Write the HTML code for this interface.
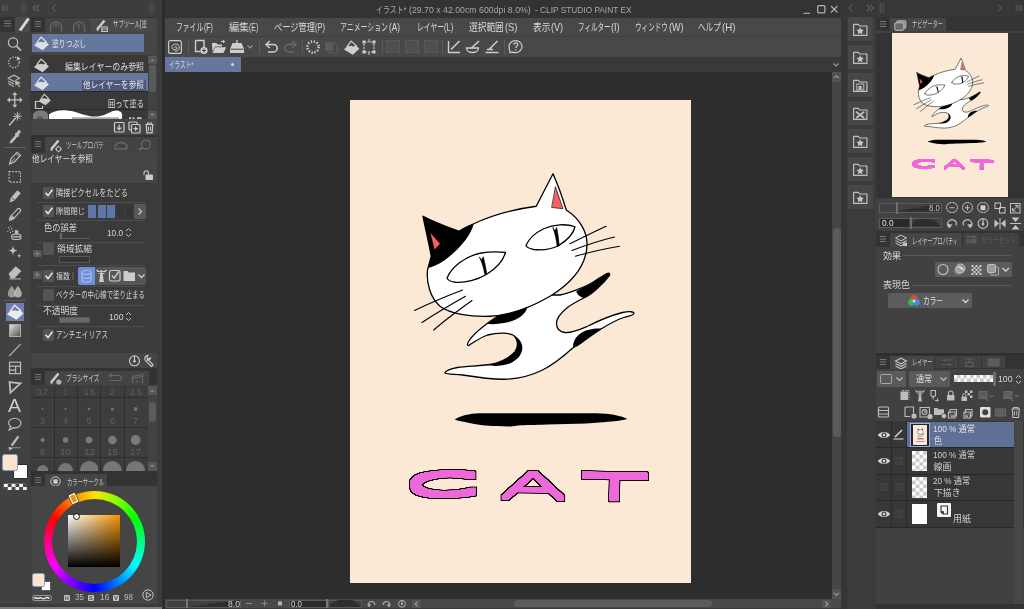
<!DOCTYPE html>
<html lang="ja"><head><meta charset="utf-8"><title>CLIP STUDIO PAINT EX</title>
<style>
html,body{margin:0;padding:0;}
body{width:1024px;height:609px;overflow:hidden;background:#3c3c3c;position:relative;font-family:"Liberation Sans","Noto Sans CJK JP",sans-serif;}
#app{position:absolute;left:0;top:0;width:1024px;height:609px;overflow:hidden;will-change:transform;}
#app div,#app svg,#app span.t{position:absolute;}
#app div{box-sizing:border-box;}
span.t{white-space:nowrap;transform-origin:0 50%;letter-spacing:0;}
svg{overflow:visible;}
</style></head><body><div id="app">
<div style="left:161px;top:0px;width:686px;height:609px;background:#323232;"></div>
<div style="left:165px;top:0px;width:676px;height:18px;background:#333333;"></div>
<span class="t" style="left:375.6px;top:2.85px;font-size:9.5px;line-height:13.5px;color:#a8a8a8;transform:scaleX(0.7323);">イラスト*</span>
<span class="t" style="left:409px;top:2.85px;font-size:9.5px;line-height:13.5px;color:#a8a8a8;transform:scaleX(0.9218);">(29.70 x 42.00cm 600dpi 8.0%)</span>
<span class="t" style="left:535px;top:2.85px;font-size:9.5px;line-height:13.5px;color:#a8a8a8;transform:scaleX(0.8745);">- CLIP STUDIO PAINT EX</span>
<svg style="left:800px;top:2px;" width="40" height="14" viewBox="0 0 40 14"><path d="M3.500 11.300h6.500" stroke="#b4b4b4" stroke-width="1.100" fill="none"/><rect x="17.700" y="3.700" width="7.200" height="7.200" rx="1" stroke="#b4b4b4" stroke-width="1.200" fill="none"/><path d="M31 4l6.500 6.500M37.500 4L31 10.500" stroke="#b4b4b4" stroke-width="1.100" fill="none"/></svg>
<div style="left:165px;top:18px;width:676px;height:18px;background:#484848;"></div>
<div style="left:165px;top:35.5px;width:676px;height:2px;background:#3f3f3f;"></div>
<span class="t" style="left:176px;top:20.05px;font-size:10.5px;line-height:14.5px;color:#d8d8d8;transform:scaleX(0.6476);">ファイル</span>
<span class="t" style="left:203.8px;top:20.05px;font-size:10.5px;line-height:14.5px;color:#d8d8d8;transform:scaleX(0.6631);">(F)</span>
<span class="t" style="left:228.5px;top:20.05px;font-size:10.5px;line-height:14.5px;color:#d8d8d8;transform:scaleX(0.9619);">編集</span>
<span class="t" style="left:249.3px;top:20.05px;font-size:10.5px;line-height:14.5px;color:#d8d8d8;transform:scaleX(0.6571);">(E)</span>
<span class="t" style="left:273.5px;top:20.05px;font-size:10.5px;line-height:14.5px;color:#d8d8d8;transform:scaleX(0.7821);">ページ管理</span>
<span class="t" style="left:315.0px;top:20.05px;font-size:10.5px;line-height:14.5px;color:#d8d8d8;transform:scaleX(0.7143);">(P)</span>
<span class="t" style="left:340.2px;top:20.05px;font-size:10.5px;line-height:14.5px;color:#d8d8d8;transform:scaleX(0.6567);">アニメーション</span>
<span class="t" style="left:388.8px;top:20.05px;font-size:10.5px;line-height:14.5px;color:#d8d8d8;transform:scaleX(0.7857);">(A)</span>
<span class="t" style="left:416.6px;top:20.05px;font-size:10.5px;line-height:14.5px;color:#d8d8d8;transform:scaleX(0.6501);">レイヤー</span>
<span class="t" style="left:444.3px;top:20.05px;font-size:10.5px;line-height:14.5px;color:#d8d8d8;transform:scaleX(0.7319);">(L)</span>
<span class="t" style="left:469.4px;top:20.05px;font-size:10.5px;line-height:14.5px;color:#d8d8d8;transform:scaleX(0.8286);">選択範囲</span>
<span class="t" style="left:504.8px;top:20.05px;font-size:10.5px;line-height:14.5px;color:#d8d8d8;transform:scaleX(0.8857);">(S)</span>
<span class="t" style="left:533px;top:20.05px;font-size:10.5px;line-height:14.5px;color:#d8d8d8;transform:scaleX(0.8238);">表示</span>
<span class="t" style="left:550.9px;top:20.05px;font-size:10.5px;line-height:14.5px;color:#d8d8d8;transform:scaleX(0.8643);">(V)</span>
<span class="t" style="left:578px;top:20.05px;font-size:10.5px;line-height:14.5px;color:#d8d8d8;transform:scaleX(0.6215);">フィルター</span>
<span class="t" style="left:611.0999999999999px;top:20.05px;font-size:10.5px;line-height:14.5px;color:#d8d8d8;transform:scaleX(0.8769);">(I)</span>
<span class="t" style="left:635.4px;top:20.05px;font-size:10.5px;line-height:14.5px;color:#d8d8d8;transform:scaleX(0.6267);">ウィンドウ</span>
<span class="t" style="left:668.9px;top:20.05px;font-size:10.5px;line-height:14.5px;color:#d8d8d8;transform:scaleX(0.8577);">(W)</span>
<span class="t" style="left:698.3px;top:20.05px;font-size:10.5px;line-height:14.5px;color:#d8d8d8;transform:scaleX(0.7206);">ヘルプ</span>
<span class="t" style="left:721.5999999999999px;top:20.05px;font-size:10.5px;line-height:14.5px;color:#d8d8d8;transform:scaleX(0.9192);">(H)</span>
<div style="left:165px;top:37px;width:676px;height:20px;background:#484848;"></div>
<div style="left:165px;top:57px;width:676px;height:15px;background:#393939;"></div>
<div style="left:165px;top:57px;width:76px;height:15px;background:#66779d;"></div>
<span class="t" style="left:169px;top:58.50px;font-size:9px;line-height:13px;color:#dcdcdc;transform:scaleX(0.6230);">イラスト*</span>
<div style="left:231px;top:63px;width:3px;height:3px;background:#d8d8d8;border-radius:50%;"></div>
<svg style="left:832px;top:61px;" width="8" height="8" viewBox="0 0 8 8"><path d="M1.5 2.5L4 5l2.5-2.5" stroke="#9a9a9a" stroke-width="1.1" fill="none"/></svg>
<div style="left:165px;top:72px;width:667px;height:527px;background:#2d2d2d;"></div>
<div style="left:349.7px;top:100.2px;width:341.4px;height:483.2px;background:#fbe8d5;"></div>
<div style="left:832px;top:72px;width:9px;height:527px;background:#454545;"></div>
<div style="left:832px;top:72px;width:9px;height:10px;background:#525252;"></div>
<svg style="left:832px;top:72px;" width="9" height="10" viewBox="0 0 9 10"><path d="M2 6.2L4.5 3.7 7 6.2" stroke="#a0a0a0" stroke-width="1.1" fill="none"/></svg>
<div style="left:833px;top:228px;width:7.5px;height:209px;background:#5a5a5a;border-radius:3.5px;"></div>
<div style="left:832px;top:589px;width:9px;height:10px;background:#525252;"></div>
<svg style="left:832px;top:589px;" width="9" height="10" viewBox="0 0 9 10"><path d="M2 3.8L4.5 6.3 7 3.8" stroke="#a0a0a0" stroke-width="1.1" fill="none"/></svg>
<div style="left:165px;top:599px;width:676px;height:8.5px;background:#484848;"></div>
<div style="left:165px;top:607.5px;width:676px;height:1.5px;background:#3a3a3a;"></div>
<div style="left:166px;top:599.5px;width:75px;height:8px;background:#404040;border:1px solid #5a5a5a;"></div>
<svg style="left:167px;top:600px;" width="73" height="7" viewBox="0 0 73 7"><path d="M20 7L73 0V7z" fill="#2e2e2e"/></svg>
<div style="left:186px;top:599px;width:2px;height:9px;background:#777;"></div>
<span class="t" style="left:228px;top:597.75px;font-size:8.5px;line-height:12.5px;color:#d0d0d0;transform:scaleX(1.0145);">8.0</span>
<svg style="left:243px;top:599px;" width="42" height="9" viewBox="0 0 42 9"><path d="M3 4.5h6M18.5 4.5h6M21.5 1.5v6" stroke="#8a8a8a" stroke-width="1.1" fill="none"/><rect x="35" y="2.5" width="4" height="4" fill="#b0b0b0"/></svg>
<div style="left:288.5px;top:599.5px;width:38px;height:8px;background:#2c2c2c;border:1px solid #5a5a5a;"></div>
<span class="t" style="left:291px;top:597.75px;font-size:8.5px;line-height:12.5px;color:#d0d0d0;transform:scaleX(0.9300);">0.0</span>
<div style="left:328px;top:599.5px;width:34px;height:8px;background:#404040;border:1px solid #5a5a5a;"></div>
<svg style="left:329px;top:600px;" width="32" height="7" viewBox="0 0 32 7"><path d="M0 7C4 0 10 0 14 0H24L32 7z" fill="#2e2e2e"/></svg>
<div style="left:325.5px;top:599px;width:2px;height:9px;background:#777;"></div>
<svg style="left:366px;top:599px;" width="42" height="9" viewBox="0 0 42 9"><path d="M3 7.5A3.2 3.2 0 1 1 8.8 6" stroke="#b0b0b0" stroke-width="1.1" fill="none"/><path d="M1 5.2l2 3 2.2-2.6z" fill="#b0b0b0"/><path d="M23 7.5A3.2 3.2 0 1 0 17.2 6" stroke="#b0b0b0" stroke-width="1.1" fill="none"/><path d="M25 5.2l-2 3-2.2-2.6z" fill="#b0b0b0"/><circle cx="36" cy="4.8" r="3.4" stroke="#b0b0b0" stroke-width="1" fill="none"/><path d="M36 1.4v3.4" stroke="#b0b0b0" stroke-width="1"/><circle cx="36" cy="5" r="1.1" fill="#b0b0b0"/></svg>
<div style="left:412px;top:599.5px;width:9px;height:8px;background:#555;"></div>
<svg style="left:412px;top:599.5px;" width="9" height="8" viewBox="0 0 9 8"><path d="M5.6 1.6L3.2 4l2.4 2.4" stroke="#a0a0a0" stroke-width="1.1" fill="none"/></svg>
<div style="left:514px;top:600px;width:198px;height:7px;background:#5c5c5c;border-radius:3.5px;"></div>
<div style="left:822px;top:599.5px;width:9px;height:8px;background:#555;"></div>
<svg style="left:822px;top:599.5px;" width="9" height="8" viewBox="0 0 9 8"><path d="M3.4 1.6L5.8 4 3.4 6.4" stroke="#a0a0a0" stroke-width="1.1" fill="none"/></svg>
<div style="left:187.5px;top:40px;width:1px;height:14px;background:#5c5c5c;"></div>
<div style="left:259px;top:40px;width:1px;height:14px;background:#5c5c5c;"></div>
<div style="left:302px;top:40px;width:1px;height:14px;background:#5c5c5c;"></div>
<div style="left:381.5px;top:40px;width:1px;height:14px;background:#5c5c5c;"></div>
<div style="left:441.5px;top:40px;width:1px;height:14px;background:#5c5c5c;"></div>
<div style="left:503.8px;top:40px;width:1px;height:14px;background:#5c5c5c;"></div>
<svg style="left:168px;top:40px;" width="14" height="14" viewBox="0 0 14 14"><rect x="0.6" y="0.6" width="12.8" height="12.8" rx="2" stroke="#cfcfcf" stroke-width="1.100" fill="none"/><path d="M6.300 7.600c.6-1.300 2.600-.9 2.600.4 0 1.800-2.900 2.500-4.300.9-1.600-1.900 0-4.700 2.900-4.800 2.400 0 4.100 1.700 3.800 3.900-.3 1.900-2.100 3.100-4.200 3.100" stroke="#cfcfcf" stroke-width="1" fill="none"/></svg>
<svg style="left:193px;top:39px;" width="16" height="16" viewBox="0 0 16 16"><path d="M2.500 1.500h8.500v7M2.500 1.500v11h5" stroke="#cfcfcf" stroke-width="1.400" fill="none"/><circle cx="11" cy="11.500" r="3.600" fill="#cfcfcf"/><path d="M9 11.500h4M11 9.500v4" stroke="#484848" stroke-width="1.100"/></svg>
<svg style="left:211px;top:40px;" width="16" height="14" viewBox="0 0 16 14"><path d="M1 3h4.500l1.200 1.500H11v2H4L1.500 12z" fill="#cfcfcf"/><path d="M4.200 7.300h11L12.400 13H1.600z" fill="#cfcfcf"/><path d="M10 1.500h3.500M12 0l1.800 1.500L12 3" stroke="#cfcfcf" stroke-width="1" fill="none"/></svg>
<svg style="left:229px;top:39px;" width="16" height="16" viewBox="0 0 16 16"><path d="M1 10l2.500-6h9L15 10v4H1z" fill="#cfcfcf"/><path d="M1.500 10.200h13" stroke="#484848" stroke-width="1"/><path d="M8 1v6M5.600 5L8 7.600 10.400 5" stroke="#cfcfcf" stroke-width="1.300" fill="none"/><path d="M3.800 4.300h8.400" stroke="#484848" stroke-width="0"/></svg>
<svg style="left:246px;top:44px;" width="8" height="6" viewBox="0 0 8 6"><path d="M1.500 1.500L4 4l2.500-2.500" stroke="#9a9a9a" stroke-width="1.1" fill="none"/></svg>
<svg style="left:264px;top:39px;" width="16" height="16" viewBox="0 0 16 16"><path d="M3 5.500h6.500a3.700 3.700 0 0 1 0 7.400H4" stroke="#cfcfcf" stroke-width="1.500" fill="none"/><path d="M5.800 2L2 5.500l3.800 3.500" stroke="#cfcfcf" stroke-width="1.500" fill="none"/></svg>
<svg style="left:282px;top:39px;" width="16" height="16" viewBox="0 0 16 16"><path d="M13 5.500H6.500a3.700 3.700 0 0 0 0 7.400H12" stroke="#686868" stroke-width="1.500" fill="none"/><path d="M10.200 2L14 5.500 10.200 9" stroke="#686868" stroke-width="1.500" fill="none"/></svg>
<svg style="left:305px;top:39px;" width="16" height="16" viewBox="0 0 16 16"><circle cx="8" cy="8" r="5.600" stroke="#cfcfcf" stroke-width="2.600" stroke-dasharray="1.300 1.630" fill="none"/></svg>
<svg style="left:324px;top:40px;" width="14" height="14" viewBox="0 0 14 14"><rect x="1" y="2" width="8" height="9" fill="#5c5c5c"/><rect x="5" y="4" width="8" height="9" fill="none" stroke="#5c5c5c" stroke-width="1"/></svg>
<svg style="left:343.5px;top:40px;" width="15.4" height="14.8" viewBox="0 0 14 13.5"><path d="M0 8.700L3.200 5.300C5 6.600 6 4.600 7.500 5.600 9 6.600 10 5.100 11.200 5.300L14 8 8 13.400z" fill="#cfcfcf"/><path d="M2.600 6.300L6.500 1 11.800 5.800" stroke="#cfcfcf" stroke-width="1.150" fill="none" stroke-linejoin="round"/></svg>
<svg style="left:361px;top:39px;" width="16" height="16" viewBox="0 0 16 16"><rect x="3" y="3" width="10" height="10" stroke="#cfcfcf" stroke-width="1.100" fill="none" stroke-dasharray="2 1"/><g fill="#cfcfcf"><rect x="1.500" y="1.500" width="3" height="3"/><rect x="11.500" y="1.500" width="3" height="3"/><rect x="1.500" y="11.500" width="3" height="3"/><rect x="11.500" y="11.500" width="3" height="3"/></g><path d="M8 0v3M8 13v3" stroke="#cfcfcf" stroke-width="1"/></svg>
<svg style="left:385.5px;top:40px;" width="14" height="13" viewBox="0 0 14 13"><rect x="0.500" y="0.500" width="13" height="12" stroke="#585858" stroke-width="1" fill="#4e4e4e"/><path d="M1 12.500L13 1" stroke="#585858" stroke-width="1"/></svg>
<svg style="left:405px;top:40px;" width="14" height="13" viewBox="0 0 14 13"><rect x="0.500" y="0.500" width="13" height="12" stroke="#585858" stroke-width="1" fill="#4e4e4e"/><path d="M1 12.500L13 1" stroke="#585858" stroke-width="1"/></svg>
<svg style="left:423.5px;top:40px;" width="14" height="13" viewBox="0 0 14 13"><rect x="0.500" y="0.500" width="13" height="12" stroke="#585858" stroke-width="1" fill="#4e4e4e"/><path d="M1 12.500L13 1" stroke="#585858" stroke-width="1"/></svg>
<svg style="left:446px;top:39px;" width="16" height="16" viewBox="0 0 16 16"><path d="M2.500 2v11.500H14" stroke="#cfcfcf" stroke-width="1.400" fill="none"/><path d="M5 10.500L13.500 2" stroke="#cfcfcf" stroke-width="1.600"/></svg>
<svg style="left:465px;top:39px;" width="16" height="16" viewBox="0 0 16 16"><path d="M1.500 9c0 6 12 6 12 0z" stroke="#cfcfcf" stroke-width="1.300" fill="none"/><path d="M6 9.500L14 2" stroke="#cfcfcf" stroke-width="1.600"/></svg>
<svg style="left:484px;top:39px;" width="16" height="16" viewBox="0 0 16 16"><path d="M1.500 13.500h13" stroke="#cfcfcf" stroke-width="1.400"/><path d="M3 10.500h6M5 10.500L13.500 2" stroke="#cfcfcf" stroke-width="1.500" fill="none"/></svg>
<svg style="left:508px;top:39px;" width="16" height="16" viewBox="0 0 16 16"><path d="M2 13.500c0-2.500-1-3-1-6a6.500 6 0 1 1 4 5.600z" stroke="#cfcfcf" stroke-width="1.200" fill="none"/><path d="M5.800 5.800c0-2.600 4-2.600 4-.2 0 1.600-2 1.600-2 3.300" stroke="#cfcfcf" stroke-width="1.200" fill="none"/><circle cx="7.800" cy="10.800" r=".8" fill="#cfcfcf"/></svg>
<div style="left:0px;top:0px;width:161px;height:609px;background:#3a3a3a;"></div>
<div style="left:157px;top:0px;width:4.5px;height:609px;background:#3c3c3c;"></div>
<div style="left:161.5px;top:0px;width:3.5px;height:609px;background:#2c2c2c;"></div>
<div style="left:0px;top:0px;width:157px;height:16.5px;background:#3d3d3d;"></div>
<svg style="left:0px;top:0px;" width="160" height="16" viewBox="0 0 160 16"><g stroke="#606060" stroke-width="1.100" fill="none"><path d="M5 5L2.200 8 5 11M8.500 5L5.700 8 8.500 11"/><path d="M35.500 5L32.700 8l2.800 3M39 5L36.200 8 39 11"/><path d="M55.500 4.500L52.500 8l3 3.500"/></g><g fill="#4c4c4c"><rect x="21.500" y="2.500" width="2" height="11"/><rect x="24.500" y="2.500" width="1.500" height="11"/><rect x="149.500" y="2.500" width="2" height="11"/><rect x="152.500" y="2.500" width="1.500" height="11"/></g></svg>
<div style="left:0px;top:16.5px;width:29.5px;height:592.5px;background:#414141;"></div>
<div style="left:0px;top:16.5px;width:29.5px;height:15.5px;background:#333;"></div>
<svg style="left:2px;top:18px;" width="12" height="12" viewBox="0 0 12 12"><path d="M2 3h7M2 5.500h7M2 8h7" stroke="#777" stroke-width="1" fill="none"/></svg>
<div style="left:15px;top:17px;width:14.5px;height:15px;background:#4a4a4a;"></div>
<svg style="left:15px;top:17px;" width="15" height="15" viewBox="0 0 15 15"><path d="M5 13.500L13.500 1.500" stroke="#d8d8d8" stroke-width="3" fill="none"/></svg>
<svg style="left:5.70px;top:35.58px;" width="17.60" height="15.84" viewBox="0 0 20 18"><circle cx="8" cy="7.500" r="5.300" stroke="#bebebe" stroke-width="1.400" fill="none"/><path d="M12 11.500l5 5" stroke="#bebebe" stroke-width="2"/></svg>
<svg style="left:5.70px;top:54.08px;" width="17.60" height="15.84" viewBox="0 0 20 18"><circle cx="9" cy="9.500" r="6" stroke="#bebebe" stroke-width="1.400" stroke-dasharray="1.600 1.600" fill="none"/><path d="M12.500 2.500l4.500 3-4.700 2z" fill="#bebebe"/></svg>
<svg style="left:5.70px;top:73.48px;" width="17.60" height="15.84" viewBox="0 0 20 18"><path d="M2.500 6L9 2.500 15.500 6 9 9.500zM2.500 9L9 12.500M2.500 12l6.500 3.500" stroke="#bebebe" stroke-width="1.200" fill="none"/><path d="M10 8l7.500 3-3 1.200 2 3.300-1.600 1-2-3.400-2.300 2z" fill="#bebebe" stroke="#414141" stroke-width=".5"/></svg>
<svg style="left:5.70px;top:92.08px;" width="17.60" height="15.84" viewBox="0 0 20 18"><path d="M10 1.500v15M2.500 9h15" stroke="#bebebe" stroke-width="1.500"/><path d="M10 0l3 3.500H7zM10 18l3-3.500H7zM1 9l3.500-3v6zM19 9l-3.500-3v6z" fill="#bebebe"/></svg>
<svg style="left:5.70px;top:111.08px;" width="17.60" height="15.84" viewBox="0 0 20 18"><path d="M3.500 16.500L11 8" stroke="#bebebe" stroke-width="1.600"/><path d="M13 1v10M8 6h10M9.500 2.500l7 7M16.500 2.500l-7 7" stroke="#bebebe" stroke-width="1.100"/></svg>
<svg style="left:5.70px;top:129.38px;" width="17.60" height="15.84" viewBox="0 0 20 18"><path d="M4 16.500l1-3 6-7 2.200 2-6 7z" fill="#bebebe"/><path d="M10.500 5l4 3.500" stroke="#bebebe" stroke-width="2"/><path d="M12.500 6.500l2.500-3.500" stroke="#bebebe" stroke-width="3.400" stroke-linecap="round"/></svg>
<div style="left:4px;top:147.3px;width:22px;height:1px;background:#606060;"></div>
<svg style="left:5.70px;top:150.08px;" width="17.60" height="15.84" viewBox="0 0 20 18"><path d="M4 16l1.500-6 7-7.500 4 3.600-7 7.500z" stroke="#bebebe" stroke-width="1.300" fill="none"/><path d="M4 16l6-6.500" stroke="#bebebe" stroke-width="1.100"/><path d="M11.300 4l4 3.600" stroke="#bebebe" stroke-width="1.100"/></svg>
<svg style="left:5.70px;top:169.08px;" width="17.60" height="15.84" viewBox="0 0 20 18"><rect x="3.500" y="3" width="13" height="12" stroke="#bebebe" stroke-width="1.300" stroke-dasharray="2 1.500" fill="none"/></svg>
<svg style="left:5.70px;top:187.58px;" width="17.60" height="15.84" viewBox="0 0 20 18"><path d="M4 16.500l1.500-5.500L13 2.500l3.800 3.500-7.500 8.500z" fill="#bebebe"/><path d="M6.500 11l4 3.500" stroke="#414141" stroke-width="1"/></svg>
<svg style="left:5.70px;top:206.08px;" width="17.60" height="15.84" viewBox="0 0 20 18"><path d="M4 16.500c0-3 1-5 3-6.500l6-6.500c2-2 5 .8 3 2.800l-6 6.500c-1.500 2-3.500 3.200-6 3.700z" stroke="#bebebe" stroke-width="1.300" fill="none"/><path d="M4.500 16c.3-2 1.200-3.600 2.800-5l3 2.800c-1.400 1.400-3.400 2-5.800 2.200z" fill="#bebebe"/></svg>
<svg style="left:5.70px;top:225.08px;" width="17.60" height="15.84" viewBox="0 0 20 18"><rect x="6.500" y="10.500" width="10.500" height="6" rx="2.500" stroke="#bebebe" stroke-width="1.300" fill="none"/><path d="M8 13.500h8" stroke="#bebebe" stroke-width="1.600"/><rect x="10" y="6" width="4" height="4" fill="#bebebe"/><g fill="#bebebe"><circle cx="3" cy="3" r=".7"/><circle cx="5.500" cy="2" r=".7"/><circle cx="4" cy="5.500" r=".7"/><circle cx="6.500" cy="4.500" r=".7"/><circle cx="2" cy="7.500" r=".7"/><circle cx="5" cy="8.500" r=".7"/><circle cx="7.500" cy="7" r=".7"/></g></svg>
<svg style="left:5.70px;top:244.08px;" width="17.60" height="15.84" viewBox="0 0 20 18"><path d="M8 1.500c.4 4 1.500 5.600 5.500 6-4 .4-5.100 2-5.500 6-.4-4-1.500-5.600-5.500-6 4-.4 5.100-2 5.500-6z" fill="#bebebe"/><path d="M15 10.500c.2 2 .9 2.800 3 3-2.100.2-2.800 1-3 3-.2-2-.9-2.800-3-3 2.100-.2 2.800-1 3-3z" fill="#bebebe"/></svg>
<svg style="left:5.70px;top:264.08px;" width="17.60" height="15.84" viewBox="0 0 20 18"><path d="M3 11l8-8.500 6.500 5.500-8 8.500H5.500z" fill="#bebebe"/><path d="M3.200 11.200l5.800 5" stroke="#414141" stroke-width="0"/><path d="M4 17h13" stroke="#bebebe" stroke-width="1.100"/></svg>
<svg style="left:5.70px;top:283.08px;" width="17.60" height="15.84" viewBox="0 0 20 18"><path d="M6.500 3c2 3 4.500 6 4.500 9a4.500 4.500 0 0 1-9 0c0-3 2.500-6 4.500-9z" fill="#9a9a9a"/><path d="M13.500 3c2 3 4.500 6 4.500 9a4.500 4.500 0 0 1-9 0c0-3 2.500-6 4.500-9z" fill="#bebebe" opacity=".85"/></svg>
<div style="left:4px;top:300px;width:22px;height:1px;background:#606060;"></div>
<div style="left:6px;top:302.5px;width:17.5px;height:18px;background:#6b7fb0;"></div>
<svg style="left:6.8px;top:303.8px;" width="16.5" height="15.9" viewBox="0 0 14 13.5"><path d="M0 8.700L3.200 5.300C5 6.600 6 4.600 7.500 5.600 9 6.600 10 5.100 11.200 5.300L14 8 8 13.400z" fill="#ececec"/><path d="M2.600 6.300L6.500 1 11.800 5.800" stroke="#ececec" stroke-width="1.150" fill="none" stroke-linejoin="round"/></svg>
<div style="left:8.5px;top:324px;width:12.5px;height:12.5px;background:#888;background:linear-gradient(135deg,#e0e0e0,#555);border:1px solid #aaa;"></div>
<svg style="left:5.70px;top:341.58px;" width="17.60" height="15.84" viewBox="0 0 20 18"><path d="M3.500 16L16.500 2.500" stroke="#bebebe" stroke-width="1.300"/></svg>
<svg style="left:5.70px;top:360.08px;" width="17.60" height="15.84" viewBox="0 0 20 18"><rect x="4" y="2.500" width="12.500" height="13" stroke="#bebebe" stroke-width="1.300" fill="none"/><path d="M4 7h12.500M4 11.500h7M11 7v8.500" stroke="#bebebe" stroke-width="1.300"/></svg>
<svg style="left:5.70px;top:378.58px;" width="17.60" height="15.84" viewBox="0 0 20 18"><path d="M4 3.500l12.500 1.500L5 15.500z" stroke="#bebebe" stroke-width="2" fill="none"/></svg>
<span class="t" style="left:8px;top:394.00px;font-size:19px;line-height:23px;color:#cfcfcf;transform:scaleX(1.0246);">A</span>
<svg style="left:5.70px;top:416.08px;" width="17.60" height="15.84" viewBox="0 0 20 18"><ellipse cx="10" cy="8" rx="7" ry="5.500" stroke="#bebebe" stroke-width="1.300" fill="none"/><path d="M5.500 12l-2 4 5-2.500" stroke="#bebebe" stroke-width="1.300" fill="#414141"/></svg>
<svg style="left:5.70px;top:435.08px;" width="17.60" height="15.84" viewBox="0 0 20 18"><path d="M6.500 12L14 1.500" stroke="#bebebe" stroke-width="2.600"/><path d="M3 13.500l5 1.500-4.500 2.500z" fill="#bebebe"/><path d="M3 14.500h14" stroke="#9a9a9a" stroke-width="1"/></svg>
<div style="left:13px;top:464px;width:14.5px;height:14.5px;background:#ffffff;border:1px solid #2a2a2a;border-radius:1px;"></div>
<div style="left:1.5px;top:454px;width:16.5px;height:17px;background:#fde3ca;border:1.600px solid #7d9bdc;border-radius:2.500px;"></div>
<div style="left:2.5px;top:482.5px;width:24.5px;height:7.5px;background:#ffffff;border:1px solid #6a6a6a;border-radius:2.500px;background:repeating-linear-gradient(90deg,#fff 0 4px,#555 4px 8px);"></div>
<svg style="left:3.5px;top:483.5px;" width="23" height="6" viewBox="0 0 23 6"><path d="M0 0h23v6H0z" fill="#4a4a4a"/><g fill="#f4f4f4"><rect x="0" y="0" width="3.800" height="3"/><rect x="7.600" y="0" width="3.800" height="3"/><rect x="15.200" y="0" width="3.800" height="3"/><rect x="3.800" y="3" width="3.800" height="3"/><rect x="11.400" y="3" width="3.800" height="3"/><rect x="19" y="3" width="3.800" height="3"/></g></svg>
<div style="left:30.5px;top:16.5px;width:126.5px;height:592.5px;background:#333;"></div>
<div style="left:32px;top:17.5px;width:12px;height:13.5px;background:#333;"></div>
<svg style="left:32px;top:17.5px;" width="12" height="13.5" viewBox="0 0 12 13.5"><path d="M3 3.500h6M3 6h6M3 8.500h6" stroke="#777" stroke-width="1" fill="none"/></svg>
<div style="left:45px;top:17.5px;width:22.5px;height:14px;background:#434343;"></div>
<div style="left:68px;top:17.5px;width:22.5px;height:14px;background:#434343;"></div>
<svg style="left:45px;top:17.5px;" width="23" height="14" viewBox="0 0 23 14"><path d="M5.500 14V9.500a5.500 5.500 0 0 1 11 0V14" stroke="#666" stroke-width="1.300" fill="none"/><path d="M8 9l3-3 3 3" stroke="#666" stroke-width="1.200" fill="none"/></svg>
<svg style="left:68px;top:17.5px;" width="23" height="14" viewBox="0 0 23 14"><path d="M5.500 14V9.500a5.500 5.500 0 0 1 11 0V14" stroke="#666" stroke-width="1.300" fill="none"/><path d="M11 6.500v5M9.500 8l1.500-1.500" stroke="#666" stroke-width="1.200" fill="none"/></svg>
<div style="left:91px;top:17.5px;width:66px;height:14.5px;background:#4a4a4a;"></div>
<svg style="left:95px;top:18.5px;" width="16" height="13" viewBox="0 0 16 13"><path d="M2 10.500L9.500 1.500" stroke="#cfcfcf" stroke-width="2.400"/><path d="M1.500 12l2.500-.8L2.300 9.600z" fill="#cfcfcf"/><rect x="6.800" y="8" width="5.500" height="4.500" stroke="#cfcfcf" stroke-width="1" fill="none"/><path d="M6.800 10.200h5.500" stroke="#cfcfcf" stroke-width=".9"/></svg>
<span class="t" style="left:113px;top:18.25px;font-size:8.5px;line-height:12.5px;color:#c8c8c8;transform:scaleX(0.6370);">サブツール[塗</span>
<div style="left:147px;top:17.5px;width:10px;height:14.5px;background:#454545;background:linear-gradient(90deg,rgba(72,72,72,0),#454545 70%);"></div>
<div style="left:30.5px;top:32px;width:126.5px;height:102.5px;background:#454545;"></div>
<div style="left:32px;top:34px;width:112px;height:18px;background:#66779d;"></div>
<svg style="left:33.8px;top:36px;" width="15.0" height="14.4" viewBox="0 0 14 13.5"><path d="M0 8.700L3.200 5.300C5 6.600 6 4.600 7.500 5.600 9 6.600 10 5.100 11.200 5.300L14 8 8 13.400z" fill="#dcdfe8"/><path d="M2.600 6.300L6.500 1 11.800 5.800" stroke="#dcdfe8" stroke-width="1.150" fill="none" stroke-linejoin="round"/></svg>
<span class="t" style="left:52px;top:36.75px;font-size:9.5px;line-height:13.5px;color:#e8e8e8;transform:scaleX(0.7141);">塗りつぶし</span>
<div style="left:31px;top:55px;width:116.5px;height:64px;background:#393939;"></div>
<div style="left:31px;top:72.5px;width:116.5px;height:0.8px;background:#2a2a2a;"></div>
<div style="left:31px;top:73px;width:116.5px;height:17.5px;background:#66779d;"></div>
<div style="left:31px;top:90.5px;width:116.5px;height:0.8px;background:#2a2a2a;"></div>
<div style="left:31px;top:109.2px;width:116.5px;height:0.8px;background:#2a2a2a;"></div>
<svg style="left:33.8px;top:57.9px;" width="15.0" height="14.4" viewBox="0 0 14 13.5"><path d="M0 8.700L3.200 5.300C5 6.600 6 4.600 7.500 5.600 9 6.600 10 5.100 11.200 5.300L14 8 8 13.400z" fill="#cdcdcd"/><path d="M2.600 6.300L6.500 1 11.800 5.800" stroke="#cdcdcd" stroke-width="1.150" fill="none" stroke-linejoin="round"/></svg>
<svg style="left:33.8px;top:75.9px;" width="15.0" height="14.4" viewBox="0 0 14 13.5"><path d="M0 8.700L3.200 5.300C5 6.600 6 4.600 7.500 5.600 9 6.600 10 5.100 11.200 5.300L14 8 8 13.400z" fill="#dcdfe8"/><path d="M2.600 6.300L6.500 1 11.800 5.800" stroke="#dcdfe8" stroke-width="1.150" fill="none" stroke-linejoin="round"/></svg>
<svg style="left:33.5px;top:92.5px;" width="18" height="17" viewBox="0 0 18 17"><g transform="translate(4.500,0.500) scale(.88)"><path d="M0 8.700L3.200 5.300C5 6.600 6 4.600 7.500 5.600 9 6.600 10 5.100 11.200 5.300L14 8 8 13.400z" fill="#cdcdcd"/><path d="M2.600 6.300L6.500 1 11.800 5.800" stroke="#cdcdcd" stroke-width="1.200" fill="none"/></g><path d="M4.500 8.500H1.500v7h7V13" stroke="#cdcdcd" stroke-width="1.200" fill="none"/></svg>
<span class="t" style="left:65px;top:59.85px;font-size:9.5px;line-height:13.5px;color:#dedede;transform:scaleX(0.8340);">編集レイヤーのみ参照</span>
<div style="left:81.5px;top:79.5px;width:64.5px;height:11px;background:#4c5878;"></div>
<span class="t" style="left:83px;top:77.75px;font-size:9.5px;line-height:13.5px;color:#e8e8e8;transform:scaleX(0.8056);">他レイヤーを参照</span>
<span class="t" style="left:108px;top:96.85px;font-size:9.5px;line-height:13.5px;color:#dedede;transform:scaleX(0.7654);">囲って塗る</span>
<svg style="left:31px;top:110px;" width="116" height="9" viewBox="0 0 116 9"><path d="M2 9V5.500c0-3 3-5 7.500-5S17 2.500 17 5.500V9z" fill="#7c7c7c"/><path d="M5.500 9C6 5 12 5 12.500 9z" fill="#5a5a5a"/><path d="M18 9V4.500C21 2 26 .3 32 .3 40 .3 46 2.500 52 4.500 57 6 61 6.800 66 6.500 72 6.200 77 3 82 1 85 0 88 .3 90 2 91.500 4 91.500 7 90.500 9z" fill="#ffffff"/><path d="M41 9V7.200h47V9z" fill="#8a8a8a" opacity=".75"/><rect x="98" y="7.300" width="2" height="1.700" fill="#c8c8c8"/><rect x="101.500" y="7.300" width="2" height="1.700" fill="#c8c8c8"/><rect x="106" y="7.300" width="4.500" height="1.700" fill="#c8c8c8"/></svg>
<div style="left:147.5px;top:55px;width:9.5px;height:64px;background:#424242;"></div>
<div style="left:148px;top:55.5px;width:8.5px;height:8px;background:#565656;"></div>
<svg style="left:148px;top:55.5px;" width="8.5" height="8" viewBox="0 0 8.5 8"><path d="M2 5.300L4.250 3 6.500 5.300z" fill="#8a8a8a"/></svg>
<div style="left:148.5px;top:64.5px;width:7.5px;height:27px;background:#5a5a5a;border-radius:2px;"></div>
<div style="left:148px;top:110.5px;width:8.5px;height:8px;background:#565656;"></div>
<svg style="left:148px;top:110.5px;" width="8.5" height="8" viewBox="0 0 8.5 8"><path d="M2 2.700L4.250 5 6.500 2.700z" fill="#8a8a8a"/></svg>
<svg style="left:112px;top:120px;" width="45" height="14" viewBox="0 0 45 14"><g stroke="#cdcdcd" stroke-width="1.200" fill="none"><rect x="2.500" y="2.500" width="9.500" height="9.500" rx="1"/><path d="M7.200 4.500v5M5 7.500l2.200 2.200 2.200-2.200"/><rect x="17" y="2" width="8" height="8" rx="1"/><rect x="19.500" y="4.500" width="8.500" height="8.500" rx="1" fill="#454545"/><path d="M23.700 6.500v4.500M21.500 8.700h4.500"/><path d="M33.500 4.500h8M35.500 4.500V3h4v1.500M34.300 4.500l.6 8.300h5.200l.6-8.300"/><path d="M36.500 6.500v4.500M38.500 6.500v4.500" stroke-width=".9"/></g></svg>
<div style="left:30.5px;top:134.5px;width:126.5px;height:2.5px;background:#333;"></div>
<div style="left:32px;top:137.5px;width:12px;height:14.5px;background:#333;"></div>
<svg style="left:32px;top:137.5px;" width="12" height="14.5" viewBox="0 0 12 14.5"><path d="M3 3.500h6M3 6h6M3 8.500h6" stroke="#777" stroke-width="1" fill="none"/></svg>
<div style="left:45px;top:137px;width:64.5px;height:15.5px;background:#454545;"></div>
<svg style="left:49px;top:138.5px;" width="16" height="13" viewBox="0 0 16 13"><path d="M2 10.500L9.500 1.500" stroke="#cfcfcf" stroke-width="2.400"/><path d="M1.500 12l2.500-.8L2.300 9.600z" fill="#cfcfcf"/><circle cx="9.500" cy="10" r="2.300" stroke="#cfcfcf" stroke-width="1" fill="none"/><path d="M9.500 6.700v1M9.500 12.300v1M6.200 10h1M11.800 10h1" stroke="#cfcfcf" stroke-width="1"/></svg>
<span class="t" style="left:66px;top:139.25px;font-size:8.5px;line-height:12.5px;color:#c8c8c8;transform:scaleX(0.6385);">ツールプロパテ</span>
<div style="left:99px;top:137px;width:10.5px;height:15.5px;background:#454545;background:linear-gradient(90deg,rgba(72,72,72,0),#454545 75%);"></div>
<div style="left:110px;top:137px;width:22.5px;height:15.5px;background:#434343;"></div>
<div style="left:133px;top:137px;width:24px;height:15.5px;background:#434343;"></div>
<svg style="left:110px;top:137px;" width="23" height="15.5" viewBox="0 0 23 15.5"><path d="M5 12V8.500c3-4 9-4 12 0V12z" stroke="#666" stroke-width="1.300" fill="none"/><path d="M14 10l2 2 2-2z" fill="#666"/></svg>
<svg style="left:133px;top:137px;" width="24" height="15.5" viewBox="0 0 24 15.5"><circle cx="13" cy="7.500" r="4.500" stroke="#666" stroke-width="1.300" fill="none"/><path d="M6 12.500l4-1.500" stroke="#666" stroke-width="2"/></svg>
<div style="left:30.5px;top:152.5px;width:126.5px;height:30px;background:#454545;"></div>
<span class="t" style="left:32px;top:152.25px;font-size:9.5px;line-height:13.5px;color:#dcdcdc;transform:scaleX(0.8056);">他レイヤーを参照</span>
<svg style="left:142px;top:169px;" width="12" height="12" viewBox="0 0 12 12"><rect x="3.500" y="5.500" width="7.500" height="5.500" rx=".8" fill="#cdcdcd"/><path d="M2 6V4a2.200 2.200 0 0 1 4.400 0v1.500" stroke="#cdcdcd" stroke-width="1.100" fill="none"/></svg>
<div style="left:30.5px;top:183px;width:126.5px;height:169.5px;background:#3b3b3b;"></div>
<div style="left:37px;top:201.6px;width:108px;height:1px;background:#4c4c4c;"></div>
<div style="left:37px;top:220.4px;width:108px;height:1px;background:#4c4c4c;"></div>
<div style="left:37px;top:241.5px;width:108px;height:1px;background:#4c4c4c;"></div>
<div style="left:37px;top:264.5px;width:108px;height:1px;background:#4c4c4c;"></div>
<div style="left:37px;top:286.2px;width:108px;height:1px;background:#4c4c4c;"></div>
<div style="left:37px;top:304.5px;width:108px;height:1px;background:#4c4c4c;"></div>
<div style="left:37px;top:325.6px;width:108px;height:1px;background:#4c4c4c;"></div>
<div style="left:42.5px;top:187px;width:11.5px;height:11.5px;background:#545454;border-radius:1.5px;"></div>
<svg style="left:42.5px;top:187px;" width="12" height="12" viewBox="0 0 12 12"><path d="M2.600 5.800L5 8.600 9.400 2.800" stroke="#ececec" stroke-width="1.500" fill="none"/></svg>
<span class="t" style="left:56px;top:186.25px;font-size:9.5px;line-height:13.5px;color:#d4d4d4;transform:scaleX(0.7578);">隣接ピクセルをたどる</span>
<div style="left:42.5px;top:205px;width:11.5px;height:11.5px;background:#545454;border-radius:1.5px;"></div>
<svg style="left:42.5px;top:205px;" width="12" height="12" viewBox="0 0 12 12"><path d="M2.600 5.800L5 8.600 9.400 2.800" stroke="#ececec" stroke-width="1.500" fill="none"/></svg>
<span class="t" style="left:56px;top:204.75px;font-size:8.5px;line-height:12.5px;color:#d4d4d4;transform:scaleX(0.8525);">隙間閉じ</span>
<div style="left:88px;top:204.6px;width:8px;height:13px;background:#5f77a8;"></div>
<div style="left:97.5px;top:204.6px;width:8px;height:13px;background:#5f77a8;"></div>
<div style="left:107px;top:204.6px;width:8px;height:13px;background:#5f77a8;"></div>
<div style="left:116.6px;top:204.6px;width:7.4px;height:13px;background:#363636;"></div>
<div style="left:126px;top:204.6px;width:7.4px;height:13px;background:#363636;"></div>
<div style="left:134px;top:204px;width:12px;height:15px;background:#585858;border-radius:1.500px;"></div>
<svg style="left:134px;top:204px;" width="12" height="15" viewBox="0 0 12 15"><path d="M4.500 4.500l3 3-3 3" stroke="#c8c8c8" stroke-width="1.200" fill="none"/></svg>
<span class="t" style="left:43.5px;top:221.05px;font-size:9.5px;line-height:13.5px;color:#d4d4d4;transform:scaleX(0.8681);">色の誤差</span>
<span class="t" style="left:107px;top:225.55px;font-size:9.5px;line-height:13.5px;color:#d4d4d4;transform:scaleX(0.8649);">10.0</span>
<svg style="left:124.5px;top:227px;" width="7" height="11" viewBox="0 0 7 11"><path d="M1 4l2.500-2.500L6 4M1 7l2.500 2.500L6 7" stroke="#c0c0c0" stroke-width="1" fill="none"/></svg>
<div style="left:59px;top:233px;width:31px;height:5.5px;background:#3b3b3b;border-bottom:1px solid #5a5a5a;"></div>
<div style="left:59.5px;top:233px;width:2px;height:5.5px;background:#6a6a6a;"></div>
<div style="left:33px;top:249.7px;width:8.5px;height:7.5px;background:#555;border-radius:1px;"></div>
<svg style="left:33px;top:249.7px;" width="8.5" height="7.5" viewBox="0 0 8.5 7.5"><path d="M1.500 3.750h5.500M4.250 1v5.500" stroke="#888" stroke-width="1"/></svg>
<div style="left:42.5px;top:243px;width:11.5px;height:11.5px;background:#545454;border-radius:1.5px;"></div>
<span class="t" style="left:57px;top:241.65px;font-size:9.5px;line-height:13.5px;color:#d4d4d4;transform:scaleX(0.9207);">領域拡縮</span>
<div style="left:59px;top:256.4px;width:31px;height:6.2px;background:#353535;border:1px solid #565656;"></div>
<div style="left:33px;top:271px;width:8.5px;height:7.5px;background:#555;border-radius:1px;"></div>
<svg style="left:33px;top:271px;" width="8.5" height="7.5" viewBox="0 0 8.5 7.5"><path d="M1.500 3.750h5.500M4.250 1v5.500" stroke="#888" stroke-width="1"/></svg>
<div style="left:42.5px;top:270px;width:11.5px;height:11.5px;background:#545454;border-radius:1.5px;"></div>
<svg style="left:42.5px;top:270px;" width="12" height="12" viewBox="0 0 12 12"><path d="M2.600 5.800L5 8.600 9.400 2.800" stroke="#ececec" stroke-width="1.500" fill="none"/></svg>
<span class="t" style="left:56px;top:269.55px;font-size:8.5px;line-height:12.5px;color:#d4d4d4;transform:scaleX(0.8228);">複数</span>
<div style="left:71.5px;top:272px;width:2.5px;height:8px;background:#555;border-radius:1.200px;"></div>
<div style="left:78px;top:266.6px;width:68px;height:18px;background:#565656;border-radius:3px;"></div>
<div style="left:78px;top:266.6px;width:16.7px;height:18px;background:#6f8fd6;border-radius:2px 0 0 2px;"></div>
<svg style="left:78px;top:266.6px;" width="17" height="18" viewBox="0 0 17 18"><g stroke="#a9c0f0" stroke-width="1.100" fill="none"><ellipse cx="8.500" cy="5.500" rx="4.500" ry="2"/><path d="M4 5.500v7.500c0 2.700 9 2.700 9 0V5.500"/><path d="M4 9.500c0 2.500 9 2.500 9 0"/></g></svg>
<svg style="left:95px;top:266.6px;" width="52" height="18" viewBox="0 0 52 18"><g stroke="#cdcdcd" stroke-width="1.200" fill="none"><path d="M2 4.500h9M3.500 6.500h6"/><path d="M6.500 3v4" /><path d="M4.800 14.500l1-7h1.400l1 7z" fill="#cdcdcd"/><path d="M1.500 3l2 1.500M11.500 3l-2 1.500"/><rect x="14.500" y="3.500" width="10.500" height="10.500" rx="1.500"/><path d="M17 8.500l2.300 2.600L23.800 4.500" stroke-width="1.400"/></g><path d="M28.500 4h4l1 1.500h6.500V14H28.500z" fill="#cdcdcd"/><path d="M43.500 7.500l3 3 3-3" stroke="#cdcdcd" stroke-width="1.300" fill="none"/></svg>
<div style="left:42.5px;top:289px;width:11.5px;height:11.5px;background:#545454;border-radius:1.5px;"></div>
<span class="t" style="left:56px;top:288.70px;font-size:9px;line-height:13px;color:#d4d4d4;transform:scaleX(0.7083);">ベクターの中心線で塗り止まる</span>
<span class="t" style="left:43px;top:304.25px;font-size:9.5px;line-height:13.5px;color:#d4d4d4;transform:scaleX(0.9207);">不透明度</span>
<span class="t" style="left:108.5px;top:309.75px;font-size:9.5px;line-height:13.5px;color:#d4d4d4;transform:scaleX(0.9143);">100</span>
<svg style="left:124.5px;top:311.2px;" width="7" height="11" viewBox="0 0 7 11"><path d="M1 4l2.500-2.500L6 4M1 7l2.500 2.500L6 7" stroke="#c0c0c0" stroke-width="1" fill="none"/></svg>
<div style="left:59px;top:317px;width:31px;height:6px;background:#6a6a6a;border:1px solid #585858;"></div>
<div style="left:42.5px;top:329px;width:11.5px;height:11.5px;background:#545454;border-radius:1.5px;"></div>
<svg style="left:42.5px;top:329px;" width="12" height="12" viewBox="0 0 12 12"><path d="M2.600 5.800L5 8.600 9.400 2.800" stroke="#ececec" stroke-width="1.500" fill="none"/></svg>
<span class="t" style="left:56px;top:328.25px;font-size:9.5px;line-height:13.5px;color:#d4d4d4;transform:scaleX(0.6876);">アンチエイリアス</span>
<div style="left:30.5px;top:352.5px;width:126.5px;height:15.5px;background:#454545;"></div>
<svg style="left:128px;top:354px;" width="28" height="13" viewBox="0 0 28 13"><circle cx="6.500" cy="6.800" r="5" stroke="#cdcdcd" stroke-width="1.100" fill="none"/><path d="M6.500 2v4.800" stroke="#cdcdcd" stroke-width="1.100"/><circle cx="6.500" cy="7.300" r="1.300" fill="#cdcdcd"/><path d="M20.200 1.200a3.300 3.300 0 0 0-3.200 4.600l.2.500 6.300 6.200 1.700-1.700-6.200-6.300a3.300 3.300 0 0 0 0 0M20.200 1.200l-1.500 2.300 1.700 1.700 2.300-1.500a3.300 3.300 0 0 1-4 2.500" stroke="#cdcdcd" stroke-width="1.100" fill="none" stroke-linejoin="round"/></svg>
<div style="left:30.5px;top:368px;width:126.5px;height:3px;background:#333;"></div>
<div style="left:32px;top:371px;width:12px;height:13.5px;background:#333;"></div>
<svg style="left:32px;top:371px;" width="12" height="13.5" viewBox="0 0 12 13.5"><path d="M3 3.500h6M3 6h6M3 8.500h6" stroke="#777" stroke-width="1" fill="none"/></svg>
<div style="left:45px;top:371px;width:57.5px;height:14px;background:#454545;"></div>
<svg style="left:49px;top:372px;" width="16" height="13" viewBox="0 0 16 13"><path d="M2 10.500L9.500 1.500" stroke="#cfcfcf" stroke-width="2.400"/><path d="M1.500 12l2.500-.8L2.300 9.600z" fill="#cfcfcf"/><circle cx="9.800" cy="10" r="2.600" fill="#b0b0b0"/></svg>
<span class="t" style="left:66px;top:372.25px;font-size:8.5px;line-height:12.5px;color:#c8c8c8;transform:scaleX(0.6623);">ブラシサイズ</span>
<div style="left:103px;top:371px;width:22.5px;height:14px;background:#434343;"></div>
<div style="left:126px;top:371px;width:22.5px;height:14px;background:#434343;"></div>
<svg style="left:103px;top:371px;" width="23" height="14" viewBox="0 0 23 14"><path d="M7 4.500h9a2.500 2.500 0 0 1 0 5H6M8.500 2.500L6 4.500l2.500 2M6 7.500" stroke="#666" stroke-width="1.200" fill="none"/></svg>
<svg style="left:126px;top:371px;" width="23" height="14" viewBox="0 0 23 14"><path d="M6.500 12V5.500l10-2V12M6.500 7.500l10-2" stroke="#666" stroke-width="1.200" fill="none"/><circle cx="11.500" cy="10.500" r="1.200" fill="#5a5a5a"/></svg>
<div style="left:30.5px;top:385px;width:126.5px;height:86.5px;background:#404040;"></div>
<div style="left:31px;top:386px;width:117px;height:85px;background:#3d3d3d;"></div>
<div style="left:54px;top:386px;width:1px;height:85px;background:#2d2d2d;"></div>
<div style="left:77px;top:386px;width:1px;height:85px;background:#2d2d2d;"></div>
<div style="left:100px;top:386px;width:1px;height:85px;background:#2d2d2d;"></div>
<div style="left:124px;top:386px;width:1px;height:85px;background:#2d2d2d;"></div>
<div style="left:31px;top:397px;width:117px;height:1px;background:#2d2d2d;"></div>
<div style="left:31px;top:427px;width:117px;height:1px;background:#2d2d2d;"></div>
<div style="left:31px;top:457px;width:117px;height:1px;background:#2d2d2d;"></div>
<span class="t" style="left:37.0px;top:385.50px;font-size:9px;line-height:13px;color:#626262;transform:scaleX(0.8789);">0.7</span>
<span class="t" style="left:40.0px;top:415.20px;font-size:9px;line-height:13px;color:#626262;">3</span>
<span class="t" style="left:40.0px;top:445.90px;font-size:9px;line-height:13px;color:#626262;">8</span>
<span class="t" style="left:64.1px;top:385.50px;font-size:9px;line-height:13px;color:#626262;transform:scaleX(0.5981);">1</span>
<span class="t" style="left:63.099999999999994px;top:415.20px;font-size:9px;line-height:13px;color:#626262;">4</span>
<span class="t" style="left:60.099999999999994px;top:445.90px;font-size:9px;line-height:13px;color:#626262;transform:scaleX(1.0983);">10</span>
<span class="t" style="left:83.5px;top:385.50px;font-size:9px;line-height:13px;color:#626262;transform:scaleX(0.8789);">1.5</span>
<span class="t" style="left:86.5px;top:415.20px;font-size:9px;line-height:13px;color:#626262;">5</span>
<span class="t" style="left:83.5px;top:445.90px;font-size:9px;line-height:13px;color:#626262;transform:scaleX(1.0983);">12</span>
<span class="t" style="left:109.9px;top:385.50px;font-size:9px;line-height:13px;color:#626262;">2</span>
<span class="t" style="left:109.9px;top:415.20px;font-size:9px;line-height:13px;color:#626262;">6</span>
<span class="t" style="left:106.9px;top:445.90px;font-size:9px;line-height:13px;color:#626262;transform:scaleX(1.0983);">15</span>
<span class="t" style="left:129.85px;top:385.50px;font-size:9px;line-height:13px;color:#626262;transform:scaleX(0.9189);">2.5</span>
<span class="t" style="left:133.1px;top:415.20px;font-size:9px;line-height:13px;color:#626262;">7</span>
<span class="t" style="left:130.1px;top:445.90px;font-size:9px;line-height:13px;color:#626262;transform:scaleX(1.0983);">17</span>
<svg style="left:31px;top:386px;" width="117" height="85" viewBox="0 0 117 85"><circle cx="11.5" cy="23" r="0.9" fill="#727272"/><circle cx="34.6" cy="23" r="1.1" fill="#727272"/><circle cx="58.0" cy="23" r="1.3" fill="#727272"/><circle cx="81.4" cy="23" r="1.6" fill="#727272"/><circle cx="104.6" cy="23" r="1.9" fill="#727272"/><circle cx="11.5" cy="54" r="2.0" fill="#7a7a7a"/><circle cx="34.6" cy="54" r="2.7" fill="#7a7a7a"/><circle cx="58.0" cy="54" r="3.3" fill="#7a7a7a"/><circle cx="81.4" cy="54" r="4.3" fill="#7a7a7a"/><circle cx="104.6" cy="54" r="4.9" fill="#7a7a7a"/></svg>
<svg style="left:36.70px;top:464.90px;overflow:hidden;" width="11.60" height="5.80" viewBox="0 0 11.60 5.80"><circle cx="5.8" cy="5.8" r="5.8" fill="#767676"/></svg>
<svg style="left:58.20px;top:463.30px;overflow:hidden;" width="14.80" height="7.40" viewBox="0 0 14.80 7.40"><circle cx="7.4" cy="7.4" r="7.4" fill="#767676"/></svg>
<svg style="left:79.70px;top:461.40px;overflow:hidden;" width="18.60" height="9.30" viewBox="0 0 18.60 9.30"><circle cx="9.3" cy="9.3" r="9.3" fill="#767676"/></svg>
<svg style="left:103.10px;top:461.40px;overflow:hidden;" width="18.60" height="9.30" viewBox="0 0 18.60 9.30"><circle cx="9.3" cy="9.3" r="9.3" fill="#767676"/></svg>
<svg style="left:126.10px;top:461.20px;overflow:hidden;" width="19.00" height="9.50" viewBox="0 0 19.00 9.50"><circle cx="9.5" cy="9.5" r="9.5" fill="#767676"/></svg>
<div style="left:147.8px;top:386px;width:9px;height:85px;background:#424242;"></div>
<div style="left:148px;top:386px;width:8.5px;height:9px;background:#565656;"></div>
<svg style="left:148px;top:386px;" width="8.5" height="9" viewBox="0 0 8.5 9"><path d="M2 5.800L4.250 3.500 6.500 5.800z" fill="#8a8a8a"/></svg>
<div style="left:149px;top:401.5px;width:6.5px;height:20.5px;background:#5c5c5c;border-radius:3.200px;"></div>
<div style="left:148px;top:462px;width:8.5px;height:8.5px;background:#565656;"></div>
<svg style="left:148px;top:462px;" width="8.5" height="8.5" viewBox="0 0 8.5 8.5"><path d="M2 3L4.250 5.300 6.500 3z" fill="#8a8a8a"/></svg>
<div style="left:30.5px;top:471px;width:126.5px;height:2.5px;background:#333;"></div>
<div style="left:32px;top:473.5px;width:12px;height:12px;background:#333;"></div>
<svg style="left:32px;top:473.5px;" width="12" height="12" viewBox="0 0 12 12"><path d="M3 3.500h6M3 6h6M3 8.500h6" stroke="#777" stroke-width="1" fill="none"/></svg>
<div style="left:45px;top:473.5px;width:61.5px;height:13px;background:#454545;"></div>
<svg style="left:50.2px;top:476.3px;" width="11" height="11" viewBox="0 0 11 11"><circle cx="5.500" cy="5.500" r="4.700" stroke="#cfcfcf" stroke-width="1" fill="none"/><rect x="3.300" y="3.300" width="4.400" height="4.400" rx=".8" fill="#cfcfcf"/></svg>
<span class="t" style="left:66.5px;top:475.75px;font-size:8.5px;line-height:12.5px;color:#c8c8c8;transform:scaleX(0.6263);">カラーサークル</span>
<div style="left:30.5px;top:486px;width:126.5px;height:117.5px;background:#454545;"></div>
<div style="left:43.5px;top:490.5px;width:101px;height:101px;background:#000;border-radius:50%;background:conic-gradient(from 0deg,#ffe000 0deg,#80ff00 30deg,#00ff00 60deg,#00ff40 75deg,#00ff80 90deg,#00ffff 120deg,#0080ff 150deg,#0000ff 180deg,#8000ff 210deg,#ff00ff 240deg,#ff0080 270deg,#ff0000 300deg,#ff8000 330deg,#ffe000 360deg);"></div>
<div style="left:51.5px;top:498.5px;width:85px;height:85px;background:#454545;border-radius:50%;"></div>
<div style="left:67.6px;top:514.6px;width:52.7px;height:52.7px;background:#f59300;background:linear-gradient(to top,#000,rgba(0,0,0,0)),linear-gradient(to right,#fff,#f59300);"></div>
<div style="left:72.5px;top:512.5px;width:7px;height:7px;background:transparent;border:1px solid #222;border-radius:50%;box-shadow:inset 0 0 0 1px #e8e8e8;"></div>
<svg style="left:68px;top:492px;" width="12" height="14" viewBox="0 0 12 14"><rect x="2.500" y="2" width="6" height="9" rx="1" fill="#f59300" stroke="#fff" stroke-width="1.400" transform="rotate(-25 5.5 6.500)"/><rect x="1.700" y="1.200" width="7.600" height="10.600" rx="1.500" fill="none" stroke="#333" stroke-width=".7" transform="rotate(-25 5.5 6.500)"/></svg>
<div style="left:41px;top:581px;width:10px;height:10px;background:#ffffff;border:1px solid #5a5a5a;border-radius:1.500px;"></div>
<div style="left:31.5px;top:573px;width:13px;height:14px;background:#fde3ca;border:1.500px solid #7d9bdc;border-radius:2.500px;"></div>
<div style="left:32px;top:594.5px;width:20px;height:6px;background:#4a4a4a;border:1px solid #9a9a9a;border-radius:2.500px;"></div>
<svg style="left:33px;top:595.5px;" width="18" height="4" viewBox="0 0 18 4"><path d="M1 2.500c2-2 3 0 4 0s2-1.500 3.500-.5 2.500 1 4 0 2.500-.5 4 .5" stroke="#f0f0f0" stroke-width="1.400" fill="none"/></svg>
<div style="left:64px;top:594.5px;width:6.2px;height:6.5px;background:#c4c4c4;border-radius:1px;"></div>
<span class="t" style="left:65.2px;top:592.80px;font-size:6px;line-height:10px;color:#454545;font-weight:700;transform:scaleX(0.8748);">H</span>
<div style="left:88px;top:594.5px;width:6.2px;height:6.5px;background:#c4c4c4;border-radius:1px;"></div>
<span class="t" style="left:89.2px;top:592.80px;font-size:6px;line-height:10px;color:#454545;font-weight:700;transform:scaleX(0.9463);">S</span>
<div style="left:113px;top:594.5px;width:6.2px;height:6.5px;background:#c4c4c4;border-radius:1px;"></div>
<span class="t" style="left:114.2px;top:592.80px;font-size:6px;line-height:10px;color:#454545;font-weight:700;transform:scaleX(0.9463);">V</span>
<span class="t" style="left:75px;top:591.20px;font-size:9px;line-height:13px;color:#bcbcbc;transform:scaleX(0.8986);">35</span>
<span class="t" style="left:99.5px;top:591.20px;font-size:9px;line-height:13px;color:#bcbcbc;transform:scaleX(0.9485);">16</span>
<span class="t" style="left:124px;top:591.20px;font-size:9px;line-height:13px;color:#bcbcbc;transform:scaleX(0.8986);">98</span>
<svg style="left:142px;top:588.5px;" width="12" height="12" viewBox="0 0 12 12"><circle cx="6" cy="6" r="5.200" stroke="#c4c4c4" stroke-width="1" fill="none"/><path d="M4.300 3.200L9 6 4.300 8.800z" stroke="#c4c4c4" stroke-width="1" fill="none"/></svg>
<div style="left:0px;top:603.5px;width:161.5px;height:3.7px;background:#3a3a3a;"></div>
<div style="left:0px;top:607.2px;width:161.5px;height:1.8px;background:#7c7c7c;"></div>
<div style="left:841px;top:0px;width:6px;height:609px;background:#353535;"></div>
<div style="left:847px;top:0px;width:29px;height:609px;background:#3b3b3b;"></div>
<div style="left:876px;top:0px;width:148px;height:609px;background:#333;"></div>
<div style="left:841px;top:0px;width:183px;height:16.5px;background:#373737;"></div>
<svg style="left:841px;top:0px;" width="183" height="16" viewBox="0 0 183 16"><g stroke="#5e5e5e" stroke-width="1.100" fill="none"><path d="M11 4.500L8 8l3 3.500"/><path d="M26 5l2.800 3-2.800 3M29.500 5l2.800 3-2.800 3"/><path d="M157 4.500l3 3.500-3 3.500"/><path d="M174.500 5l2.800 3-2.800 3M178 5l2.800 3-2.800 3"/></g><g fill="#4c4c4c"><rect x="38.500" y="2.500" width="2" height="11"/><rect x="41.500" y="2.500" width="1.500" height="11"/></g></svg>
<div style="left:847.5px;top:17px;width:25.5px;height:24px;background:#474747;"></div>
<svg style="left:853px;top:22.5px;" width="14.5" height="13.5" viewBox="0 0 14.500 13.500"><path d="M.6 1.300h4.800l1.300 1.700h7.200V12.400H.6z" stroke="#c0c0c0" stroke-width="1.200" fill="none" stroke-linejoin="round"/><path d="M7.200 4.200l1.100 2.400 2.600.3-1.950 1.750.55 2.600L7.200 9.950 4.900 11.250l.55-2.600L3.500 6.900l2.600-.3z" fill="#c8c8c8"/></svg>
<div style="left:847.5px;top:45px;width:25.5px;height:24px;background:#474747;"></div>
<svg style="left:853px;top:50.5px;" width="14.5" height="13.5" viewBox="0 0 14.500 13.500"><path d="M.6 1.300h4.800l1.300 1.700h7.200V12.400H.6z" stroke="#c0c0c0" stroke-width="1.200" fill="none" stroke-linejoin="round"/><path d="M7.200 4.200l1.100 2.400 2.600.3-1.950 1.750.55 2.600L7.200 9.950 4.900 11.250l.55-2.600L3.500 6.900l2.600-.3z" fill="#c8c8c8"/></svg>
<div style="left:847.5px;top:73px;width:25.5px;height:24px;background:#474747;"></div>
<svg style="left:853px;top:78.5px;" width="14.5" height="13.5" viewBox="0 0 14.500 13.500"><path d="M.6 1.300h4.800l1.300 1.700h7.200V12.400H.6z" stroke="#c0c0c0" stroke-width="1.200" fill="none" stroke-linejoin="round"/><rect x="3.800" y="5" width="7" height="6" stroke="#c0c0c0" stroke-width="1" fill="none"/><rect x="5.500" y="7" width="3.200" height="3.600" fill="#c0c0c0"/></svg>
<div style="left:847.5px;top:101px;width:25.5px;height:24px;background:#474747;"></div>
<svg style="left:853px;top:106.5px;" width="14.5" height="13.5" viewBox="0 0 14.500 13.500"><path d="M.6 1.300h4.800l1.300 1.700h7.200V12.400H.6z" stroke="#c0c0c0" stroke-width="1.200" fill="none" stroke-linejoin="round"/><path d="M3.200 4.800l8 6.200M11.200 4.800l-8 6.200" stroke="#c0c0c0" stroke-width="1.800"/></svg>
<div style="left:847.5px;top:129px;width:25.5px;height:24px;background:#474747;"></div>
<svg style="left:853px;top:134.5px;" width="14.5" height="13.5" viewBox="0 0 14.500 13.500"><path d="M.6 1.300h4.800l1.300 1.700h7.200V12.400H.6z" stroke="#c0c0c0" stroke-width="1.200" fill="none" stroke-linejoin="round"/><path d="M7.200 4.200l1.100 2.400 2.600.3-1.950 1.750.55 2.600L7.200 9.950 4.900 11.250l.55-2.600L3.500 6.900l2.600-.3z" fill="#c8c8c8"/></svg>
<div style="left:847.5px;top:157px;width:25.5px;height:24px;background:#474747;"></div>
<svg style="left:853px;top:162.5px;" width="14.5" height="13.5" viewBox="0 0 14.500 13.500"><path d="M.6 1.300h4.800l1.300 1.700h7.200V12.400H.6z" stroke="#c0c0c0" stroke-width="1.200" fill="none" stroke-linejoin="round"/><path d="M7.200 4.200l1.100 2.400 2.600.3-1.950 1.750.55 2.600L7.200 9.950 4.900 11.250l.55-2.600L3.500 6.900l2.600-.3z" fill="#c8c8c8"/></svg>
<div style="left:847.5px;top:185px;width:25.5px;height:24px;background:#474747;"></div>
<svg style="left:853px;top:190.5px;" width="14.5" height="13.5" viewBox="0 0 14.500 13.500"><path d="M.6 1.300h4.800l1.300 1.700h7.200V12.400H.6z" stroke="#c0c0c0" stroke-width="1.200" fill="none" stroke-linejoin="round"/><path d="M7.200 4.200l1.100 2.400 2.600.3-1.950 1.750.55 2.600L7.200 9.950 4.900 11.250l.55-2.600L3.500 6.900l2.600-.3z" fill="#c8c8c8"/></svg>
<div style="left:877px;top:17.5px;width:12px;height:13px;background:#333;"></div>
<svg style="left:877px;top:17.5px;" width="12" height="13" viewBox="0 0 12 13"><path d="M3 3.500h6M3 6h6M3 8.500h6" stroke="#777" stroke-width="1" fill="none"/></svg>
<div style="left:890px;top:17.5px;width:56px;height:13.5px;background:#464646;"></div>
<svg style="left:894px;top:19.5px;" width="13" height="11" viewBox="0 0 13 11"><rect x="2.800" y=".8" width="9" height="7.500" rx="1" stroke="#bdbdbd" stroke-width="1" fill="#8a8a8a"/><rect x=".8" y="2.800" width="9" height="7.500" rx="1" stroke="#bdbdbd" stroke-width="1" fill="#6a6a6a"/></svg>
<span class="t" style="left:912px;top:18.25px;font-size:8.5px;line-height:12.5px;color:#c8c8c8;transform:scaleX(0.6077);">ナビゲーター</span>
<div style="left:876px;top:31px;width:148px;height:2px;background:#414141;"></div>
<div style="left:876px;top:33px;width:148px;height:165px;background:#333;"></div>
<div style="left:892px;top:33.3px;width:115.5px;height:164px;background:#fbe8d5;"></div>
<svg style="left:892px;top:33px;" width="116" height="164.5" viewBox="350 100 341 483"><g transform="translate(400,270) scale(0.25)" stroke-linejoin="round" stroke-linecap="round">
<path d="M600 100 L640 100 C680 92 740 68 770 50 C795 35 815 20 828 14 C838 10 842 16 836 24 C825 40 810 55 795 68 C775 88 750 105 735 112 C715 122 690 135 670 150 C645 170 625 195 626 215 C627 235 640 248 660 250 C690 252 720 238 750 225 C800 200 850 180 890 170 C915 165 935 166 936 173 C935 181 915 184 895 190 C865 200 830 220 804 236 C780 252 750 272 726 291 C712 301 702 307 692 311 C660 340 620 375 570 400 C530 420 480 435 420 437 C370 438 300 428 250 420 C220 416 190 418 180 412 C178 405 200 395 230 390 C270 383 330 385 376 375 C400 368 440 350 460 327 C474 308 474 280 454 261 C435 250 390 250 350 260 C320 270 295 290 275 302 C268 303 268 295 275 285 C290 260 335 222 389 186 L400 150 Z" fill="#fff" stroke="#000" stroke-width="6.24"/>
<path d="M345 215 C362 202 378 192 392 183 L445 160 L510 145 C507 172 478 198 432 209 C402 215 372 219 345 215 Z" fill="#000"/>
<path d="M705 85 C740 68 790 40 828 14 C838 10 842 16 836 24 C815 55 770 95 735 112 C720 108 708 98 705 85 Z" fill="#000"/>
<path d="M454 261 C478 272 492 295 489 315 C487 340 470 358 445 371 C425 380 400 384 380 384 L345 379 C358 378 368 377 376 375 C400 368 440 350 460 327 C474 308 474 280 454 261 Z" fill="#000"/>
<path d="M692 311 C692 286 703 266 724 252 C745 239 780 232 806 235 C780 252 750 272 726 291 C712 301 702 307 692 311Z" fill="#000"/>
</g>
<g transform="translate(400,160) scale(0.25)" stroke-linejoin="round" stroke-linecap="round">
<path d="M92 225 C140 250 190 268 235 285 C255 272 275 262 295 255 C380 215 470 195 545 185 L612 55 C632 100 650 150 665 200 C720 235 750 290 748 340 C745 420 690 490 600 545 C540 580 450 620 360 625 C280 628 200 615 160 585 C120 550 105 490 110 440 L125 385 C115 330 102 275 92 225 Z" fill="#fff" stroke="#000" stroke-width="6.24"/>
<path d="M92 225 C140 250 190 268 235 285 C255 272 275 262 295 255 C285 300 240 355 180 400 C155 418 130 428 112 432 L125 385 C115 330 102 275 92 225 Z" fill="#000"/>
<path d="M122 292L160 335L138 358Z" fill="#f36062"/>
<path d="M622 108L652 195L608 190Z" fill="#f36062" stroke="#000" stroke-width="3.12"/>
<path d="M188 473 C205 430 260 385 320 373 C355 367 395 367 422 370 C415 395 390 430 347 457 C310 480 260 492 222 489 C205 487 193 482 188 473Z" fill="#fff" stroke="#000" stroke-width="6.24"/>
<path d="M504 342 C515 315 540 292 575 275 C615 257 665 254 700 267 C695 290 670 320 635 342 C605 357 565 362 535 358 C520 355 508 350 504 342Z" fill="#fff" stroke="#000" stroke-width="6.24"/>
<path d="M318 389L326 400L333 387C339 410 344 432 347 455L339 457C335 432 328 410 318 389Z" fill="#000" stroke="#000" stroke-width="2.5"/>
<path d="M612 271L620 283L627 270C632 295 635 320 637 343L629 346C626 320 620 296 612 271Z" fill="#000" stroke="#000" stroke-width="2.5"/>
<path d="M680 335C730 310 780 285 825 265" fill="none" stroke="#000" stroke-width="5.4912"/>
<path d="M688 362C745 340 800 322 858 308" fill="none" stroke="#000" stroke-width="5.4912"/>
<path d="M702 385C760 368 820 355 878 345" fill="none" stroke="#000" stroke-width="5.4912"/>
<path d="M250 520C185 545 120 572 58 602" fill="none" stroke="#000" stroke-width="5.4912"/>
<path d="M262 545C200 580 140 615 88 650" fill="none" stroke="#000" stroke-width="5.4912"/>
<path d="M288 562C235 600 180 640 135 680" fill="none" stroke="#000" stroke-width="5.4912"/>
</g>
<path d="M454.600 419.500C460 416 470 413.500 479 413.300L596 413.300C610 413.500 622 416 627.500 419.100 622 420.500 615 421.300 611.900 421.500 600 422.500 590 423.200 586.500 423.400L547 424.400C535 424.800 525 425 518 425.400 514 426.200 511 426.400 508.400 426.400 500 426.400 494 426.200 488.800 425.800 480 425 474 424 469.300 423 463 421.800 458 420.700 454.600 419.500Z" fill="#000"/>
<filter id="dp10" x="-20%" y="-40%" width="140%" height="180%"><feMorphology operator="dilate" radius="1.9 2.7"/><feComponentTransfer result="m"><feFuncA type="linear" slope="9" intercept="-0.25"/></feComponentTransfer><feFlood flood-color="#ee68da"/><feComposite in2="m" operator="in"/></filter><filter id="db10" x="-20%" y="-40%" width="140%" height="180%"><feMorphology operator="dilate" radius="2.9 3.7"/><feComponentTransfer result="m"><feFuncA type="linear" slope="9" intercept="-0.25"/></feComponentTransfer><feFlood flood-color="#000"/><feComposite in2="m" operator="in"/></filter>
<g filter="url(#dp10)"><g transform="rotate(-1.5 443.1 484.3) translate(403.52,494.77) scale(2.7200,0.7195)"><text x="0" y="0" font-family="DejaVu Sans,Liberation Sans,sans-serif" font-weight="200" font-size="40.0" fill="#ee68da">C</text></g></g>
<filter id="dp11" x="-20%" y="-40%" width="140%" height="180%"><feMorphology operator="dilate" radius="1.3 1.5"/><feComponentTransfer result="m"><feFuncA type="linear" slope="9" intercept="-0.25"/></feComponentTransfer><feFlood flood-color="#ee68da"/><feComposite in2="m" operator="in"/></filter><filter id="db11" x="-20%" y="-40%" width="140%" height="180%"><feMorphology operator="dilate" radius="2.3 2.5"/><feComponentTransfer result="m"><feFuncA type="linear" slope="9" intercept="-0.25"/></feComponentTransfer><feFlood flood-color="#000"/><feComposite in2="m" operator="in"/></filter>
<g filter="url(#dp11)"><g transform="rotate(0.5 533.0 485.7) translate(499.33,498.40) scale(2.4758,0.8699)"><text x="0" y="0" font-family="DejaVu Sans,Liberation Sans,sans-serif" font-weight="200" font-size="40.0" fill="#ee68da">A</text></g></g>
<filter id="dp12" x="-20%" y="-40%" width="140%" height="180%"><feMorphology operator="dilate" radius="1.9 2.7"/><feComponentTransfer result="m"><feFuncA type="linear" slope="9" intercept="-0.25"/></feComponentTransfer><feFlood flood-color="#ee68da"/><feComposite in2="m" operator="in"/></filter><filter id="db12" x="-20%" y="-40%" width="140%" height="180%"><feMorphology operator="dilate" radius="2.9 3.7"/><feComponentTransfer result="m"><feFuncA type="linear" slope="9" intercept="-0.25"/></feComponentTransfer><feFlood flood-color="#000"/><feComposite in2="m" operator="in"/></filter>
<g filter="url(#dp12)"><g transform="rotate(1.0 614.5 486.6) translate(581.15,498.30) scale(2.7225,0.7979)"><text x="0" y="0" font-family="DejaVu Sans,Liberation Sans,sans-serif" font-weight="200" font-size="40.0" fill="#ee68da">T</text></g></g></svg>
<div style="left:876px;top:198px;width:148px;height:33px;background:#414141;"></div>
<div style="left:879px;top:203px;width:62.5px;height:9.5px;background:#414141;border:1px solid #5c5c5c;"></div>
<svg style="left:880px;top:204px;" width="60.5" height="7.5" viewBox="0 0 60.5 7.5"><path d="M14 7.500L60.500 0V7.500z" fill="#2e2e2e"/></svg>
<div style="left:895.5px;top:201.5px;width:2.5px;height:12.5px;background:#6e6e6e;"></div>
<span class="t" style="left:929px;top:202.25px;font-size:8.5px;line-height:12.5px;color:#c8c8c8;transform:scaleX(0.9300);">8.0</span>
<div style="left:946.3px;top:202px;width:11.4px;height:11.4px;background:transparent;border:1.100px solid #bcbcbc;border-radius:50%;"></div>
<div style="left:961.6999999999999px;top:202px;width:11.4px;height:11.4px;background:transparent;border:1.100px solid #bcbcbc;border-radius:50%;"></div>
<div style="left:977.3px;top:202px;width:11.4px;height:11.4px;background:transparent;border:1.100px solid #bcbcbc;border-radius:50%;"></div>
<svg style="left:946px;top:202px;" width="44" height="12" viewBox="0 0 44 12"><path d="M3.500 5.700h5M18.900 5.700h5M21.400 3.200v5" stroke="#bcbcbc" stroke-width="1.100"/><rect x="34.500" y="3.200" width="5" height="5" rx="1" fill="#d0d0d0"/></svg>
<svg style="left:994px;top:201.5px;" width="30" height="13" viewBox="0 0 30 13"><g stroke="#c4c4c4" stroke-width="1" fill="none"><rect x="1" y="1" width="5.500" height="5.500"/><rect x="5.500" y="5.500" width="5.500" height="5.500"/><rect x="16.500" y="1.500" width="9.500" height="9.500"/><path d="M18.500 9l5.500-5.500M21 3.500h3v3M18.500 6v3h3"/></g></svg>
<div style="left:879px;top:218px;width:62.5px;height:9.5px;background:#414141;border:1px solid #5c5c5c;"></div>
<div style="left:880px;top:219px;width:29px;height:7.5px;background:#2a2a2a;"></div>
<svg style="left:911px;top:219px;" width="29.5" height="7.5" viewBox="0 0 29.5 7.5"><path d="M0 7.500C3 1 5 0 9 0h8c5 0 9 3 12.500 7.500z" fill="#2e2e2e"/></svg>
<span class="t" style="left:882px;top:216.95px;font-size:8.5px;line-height:12.5px;color:#e0e0e0;transform:scaleX(0.9723);">0.0</span>
<div style="left:909.5px;top:216.5px;width:2.5px;height:12.5px;background:#6e6e6e;"></div>
<svg style="left:946px;top:216.5px;" width="78" height="13" viewBox="0 0 78 13"><g stroke="#bcbcbc" stroke-width="1.200" fill="none"><path d="M3.500 10.500A4.300 4.300 0 1 1 10 8.500"/><path d="M24 10.500A4.300 4.300 0 1 0 17.500 8.500"/><circle cx="37" cy="6.500" r="4.800"/><path d="M37 1.700v4.800"/></g><path d="M1 6.500l2.300 4.800 3.200-3.600z" fill="#bcbcbc"/><path d="M26.500 6.500l-2.300 4.800-3.200-3.600z" fill="#bcbcbc"/><circle cx="37" cy="7" r="1.500" fill="#bcbcbc"/><g fill="#c4c4c4"><path d="M48.500 2.500v8l4.500-4zM59.500 2.500v8l-4.500-4z"/><path d="M65.500 .5h8l-4 4.500zM65.500 12.500h8l-4-4.500z"/></g><path d="M54 1v11M64 6.500h11" stroke="#c4c4c4" stroke-width="1"/></svg>
<div style="left:876px;top:231px;width:148px;height:1.5px;background:#333;"></div>
<div style="left:877px;top:233px;width:12px;height:13px;background:#333;"></div>
<svg style="left:877px;top:233px;" width="12" height="13" viewBox="0 0 12 13"><path d="M3 3.500h6M3 6h6M3 8.500h6" stroke="#777" stroke-width="1" fill="none"/></svg>
<div style="left:890px;top:232.5px;width:71.5px;height:15px;background:#464646;"></div>
<svg style="left:894px;top:234px;" width="14" height="13" viewBox="0 0 14 13"><path d="M1.500 4L7 1.200 12.500 4 7 6.800zM1.500 6.500L7 9.300l5.500-2.800M1.500 9L7 11.800 12.500 9" stroke="#c4c4c4" stroke-width="1" fill="none"/><rect x="9" y="8.500" width="4" height="3.500" fill="#c4c4c4"/></svg>
<span class="t" style="left:912px;top:234.55px;font-size:8.5px;line-height:12.5px;color:#c8c8c8;transform:scaleX(0.6114);">レイヤープロパティ</span>
<div style="left:963px;top:232.5px;width:56px;height:14px;background:#414141;"></div>
<svg style="left:966px;top:235px;" width="12" height="9" viewBox="0 0 12 9"><rect x=".5" y=".5" width="10" height="8" fill="#5a5a5a"/><path d="M.5 3.500h10M4 .5v8" stroke="#3e3e3e" stroke-width=".8"/></svg>
<span class="t" style="left:981px;top:234.50px;font-size:8px;line-height:12px;color:#5e5e5e;transform:scaleX(0.7292);">カラーセット</span>
<div style="left:876px;top:246.5px;width:148px;height:1.5px;background:#414141;"></div>
<div style="left:876px;top:247.8px;width:148px;height:105.5px;background:#414141;"></div>
<span class="t" style="left:883px;top:248.85px;font-size:9.5px;line-height:13.5px;color:#d4d4d4;transform:scaleX(0.9466);">効果</span>
<div style="left:903px;top:255.3px;width:108px;height:1px;background:#5a5a5a;"></div>
<div style="left:935px;top:261.7px;width:77px;height:15.5px;background:#5c5c5c;border-radius:1.500px;"></div>
<svg style="left:935px;top:261.7px;" width="77" height="15.5" viewBox="0 0 77 15.5"><circle cx="8" cy="7.500" r="5" stroke="#c8c8c8" stroke-width="1.100" fill="none"/><circle cx="23.500" cy="8.500" r="4.300" fill="#8a8a8a"/><circle cx="25.500" cy="6.500" r="4.500" stroke="#c8c8c8" stroke-width="1" fill="#a8a8a8" fill-opacity=".6"/><path d="M22.500 4.500a4.500 4.500 0 0 1 6.300 4.500z" fill="#e0e0e0"/><g fill="#d0d0d0"><rect x="36.500" y="3" width="2" height="2"/><rect x="40.500" y="3" width="2" height="2"/><rect x="44.500" y="3" width="2" height="2"/><rect x="38.500" y="5" width="2" height="2"/><rect x="42.500" y="5" width="2" height="2"/><rect x="36.500" y="7" width="2" height="2"/><rect x="40.500" y="7" width="2" height="2"/><rect x="44.500" y="7" width="2" height="2"/><rect x="38.500" y="9" width="2" height="2"/><rect x="42.500" y="9" width="2" height="2"/><rect x="36.500" y="11" width="2" height="2"/><rect x="40.500" y="11" width="2" height="2"/><rect x="44.500" y="11" width="2" height="2"/></g><rect x="55.500" y="5" width="8" height="8" rx="1" stroke="#b0b0b0" stroke-width="1" fill="none"/><rect x="52.500" y="2.500" width="8" height="8" rx="1" fill="#9a9a9a" stroke="#c0c0c0" stroke-width="1"/><path d="M67.500 6l3.200 3.200L74 6" stroke="#d8d8d8" stroke-width="1.300" fill="none"/></svg>
<span class="t" style="left:883px;top:278.25px;font-size:9.5px;line-height:13.5px;color:#d4d4d4;transform:scaleX(0.9468);">表現色</span>
<div style="left:912px;top:284.7px;width:99px;height:1px;background:#5a5a5a;"></div>
<div style="left:888px;top:292.5px;width:84px;height:15.5px;background:#5c5c5c;border-radius:1.500px;"></div>
<svg style="left:907px;top:294px;" width="14" height="13" viewBox="0 0 14 13"><circle cx="7" cy="4.300" r="3.400" fill="#e0483c"/><circle cx="4.600" cy="8.300" r="3.400" fill="#3cb84a"/><circle cx="9.400" cy="8.300" r="3.400" fill="#3c8ee0"/><circle cx="7" cy="7" r="1.500" fill="#f0f0f0" opacity=".8"/></svg>
<span class="t" style="left:923px;top:293.55px;font-size:9.5px;line-height:13.5px;color:#e0e0e0;transform:scaleX(0.7014);">カラー</span>
<svg style="left:961px;top:296.5px;" width="9" height="8" viewBox="0 0 9 8"><path d="M1.500 2.500l3 3 3-3" stroke="#d8d8d8" stroke-width="1.300" fill="none"/></svg>
<div style="left:876px;top:353.3px;width:148px;height:2px;background:#2e2e2e;"></div>
<div style="left:877px;top:356px;width:12px;height:12.5px;background:#333;"></div>
<svg style="left:877px;top:356px;" width="12" height="12.5" viewBox="0 0 12 12.5"><path d="M3 3.500h6M3 6h6M3 8.500h6" stroke="#777" stroke-width="1" fill="none"/></svg>
<div style="left:890px;top:355.5px;width:44px;height:13px;background:#464646;"></div>
<svg style="left:894px;top:356.5px;" width="14" height="13" viewBox="0 0 14 13"><path d="M1.500 4L7 1.200 12.500 4 7 6.800zM1.500 6.500L7 9.300l5.500-2.800M1.500 9L7 11.800 12.500 9" stroke="#c4c4c4" stroke-width="1.100" fill="none"/></svg>
<span class="t" style="left:911.5px;top:356.25px;font-size:8.5px;line-height:12.5px;color:#c8c8c8;transform:scaleX(0.6074);">レイヤー</span>
<div style="left:935px;top:355.5px;width:22.5px;height:12.5px;background:#414141;"></div>
<div style="left:958.5px;top:355.5px;width:22.5px;height:12.5px;background:#414141;"></div>
<div style="left:982px;top:355.5px;width:22.5px;height:12.5px;background:#414141;"></div>
<svg style="left:935px;top:355.5px;" width="70" height="12.5" viewBox="0 0 70 12.5"><g stroke="#5c5c5c" stroke-width="1.200" fill="none"><path d="M7 4h10M7 8.500h10M10 2.500v3M14 7v3"/><path d="M30 3h9M34.500 3v3.500M31 6.500h7v4h-7z"/><rect x="53" y="3" width="11" height="7" fill="#5c5c5c"/></g></svg>
<div style="left:876px;top:368.5px;width:148px;height:52.7px;background:#414141;"></div>
<div style="left:876.5px;top:371px;width:29.5px;height:15.5px;background:#5a5a5a;border-radius:1.500px;"></div>
<div style="left:880px;top:373.5px;width:12px;height:10.5px;background:transparent;border:1.200px solid #aaa;border-radius:1.500px;"></div>
<svg style="left:895px;top:375px;" width="9" height="8" viewBox="0 0 9 8"><path d="M1.500 2.500l3 3 3-3" stroke="#bdbdbd" stroke-width="1.200" fill="none"/></svg>
<div style="left:909px;top:371px;width:41px;height:15.5px;background:#5a5a5a;border-radius:1.500px;"></div>
<span class="t" style="left:916px;top:371.95px;font-size:9.5px;line-height:13.5px;color:#e0e0e0;transform:scaleX(0.8414);">通常</span>
<svg style="left:938.5px;top:375px;" width="9" height="8" viewBox="0 0 9 8"><path d="M1.500 2.500l3 3 3-3" stroke="#bdbdbd" stroke-width="1.200" fill="none"/></svg>
<div style="left:954px;top:375px;width:39px;height:6.5px;background:#fff;background:repeating-conic-gradient(#c9c9c9 0 25%,#ffffff 0 50%) 0 0/6.500px 6.500px;"></div>
<div style="left:993px;top:371.5px;width:2.5px;height:14.5px;background:#6e6e6e;"></div>
<span class="t" style="left:998px;top:371.95px;font-size:9.5px;line-height:13.5px;color:#d8d8d8;transform:scaleX(0.9143);">100</span>
<svg style="left:1014.5px;top:373.5px;" width="7" height="11" viewBox="0 0 7 11"><path d="M1 4l2.500-2.500L6 4M1 7l2.500 2.500L6 7" stroke="#c0c0c0" stroke-width="1" fill="none"/></svg>
<svg style="left:899px;top:388.5px;" width="125" height="13" viewBox="0 0 125 13"><g stroke="#bdbdbd" stroke-width="1" fill="none"><rect x="2" y="3" width="6.500" height="7.500" fill="#bdbdbd"/><path d="M3.500 1.500h6.500v9" stroke-dasharray="1.500 1"/></g><g stroke="#bdbdbd" stroke-width="1.100" fill="none"><path d="M17 3h8M18.500 5h5M21 1.500v3.500M16.500 1.500l2 1.500M25.500 1.500l-2 1.500"/><path d="M19.800 12l.7-6h1l.7 6z" fill="#bdbdbd"/></g><g stroke="#bdbdbd" stroke-width="1.100" fill="none"><path d="M32 1.500h4.500v4.500c0 2-4.500 2-4.500 0zM34.200 8v2.500"/><path d="M36 11.500h3.500M38.500 9.500v3" /></g><rect x="48" y="6" width="7.500" height="5.500" rx=".8" fill="#bdbdbd"/><path d="M49.500 6V4.300a2.300 2.300 0 0 1 4.600 0V6" stroke="#bdbdbd" stroke-width="1.200" fill="none"/><g fill="#bdbdbd"><rect x="66" y="1.500" width="2.500" height="2.500"/><rect x="71" y="1.500" width="2.500" height="2.500"/><rect x="68.500" y="4" width="2.500" height="2.500"/><rect x="71" y="6.500" width="2.500" height="2.500"/><rect x="62.500" y="7.500" width="5.500" height="4.500" rx=".6"/></g><path d="M63.700 7.500V6.200a1.600 1.600 0 0 1 3.200 0v1.300" stroke="#bdbdbd" stroke-width="1" fill="none"/><g stroke="#686868" stroke-width="1.100" fill="none"><rect x="80" y="2.500" width="8" height="7" fill="#5a5a5a"/><path d="M83 6l6 6M90.500 6l2 2 2-2"/><rect x="105" y="2.500" width="8" height="7" fill="#5a5a5a"/><path d="M105 9.500l8-7M108 6l6 6M116 6l2 2 2-2"/></g></svg>
<svg style="left:876px;top:405px;" width="148" height="14" viewBox="0 0 148 14"><g stroke="#bdbdbd" stroke-width="1.100" fill="none"><rect x="2.500" y="2" width="10" height="10" rx="1"/><path d="M2.500 5.500h10M2.500 9h10"/><path d="M29 2h8.500v6.500M29 2v9.500h5"/><path d="M44 2.500h9.500v9.500H44z"/><circle cx="48.500" cy="7" r="2.500"/><path d="M48.500 5.500v1.500h1.500"/><path d="M74 8.500V4.500h6.500V11H77M72.500 7H79v6h-6.500z"/><path d="M76 9v3M74.500 10.500L76 12l1.500-1.500" stroke-width=".9"/><path d="M89.500 8.500V4.500h6.500V11h-3M88 7h6.500v6H88z"/><path d="M93 8.500l-3 3M90 9.500v2h2" stroke-width=".9"/></g><circle cx="38" cy="11" r="2.600" fill="#bdbdbd"/><circle cx="54" cy="11.500" r="2.600" fill="#bdbdbd"/><path d="M58 3h3.500l1 1.200H68V10H58z" fill="#bdbdbd"/><circle cx="68" cy="11" r="2.600" fill="#bdbdbd" stroke="#414141" stroke-width=".6"/><rect x="104" y="2" width="10.500" height="10.500" rx="1" fill="#e0e0e0"/><circle cx="109.250" cy="7.250" r="3" fill="#414141"/><g stroke="#686868" stroke-width="1.100" fill="none"><rect x="119.500" y="4" width="10" height="7" fill="#5a5a5a"/><circle cx="124.500" cy="7.500" r="1.800"/></g><g stroke="#bdbdbd" stroke-width="1.100" fill="none"><path d="M135.500 4h8.500M137.500 4V2.500h4.500V4M136.300 4l.6 8.500h5.700l.6-8.500"/><path d="M138.500 6v4.500M140.700 6v4.500" stroke-width=".9"/></g></svg>
<div style="left:876px;top:421.2px;width:138px;height:106px;background:#373737;"></div>
<div style="left:876px;top:527.2px;width:148px;height:76.8px;background:#414141;"></div>
<div style="left:1014px;top:421.2px;width:8.5px;height:182.8px;background:#474747;"></div>
<div style="left:906px;top:421.5px;width:108px;height:26.3px;background:#5f7096;"></div>
<div style="left:876px;top:447.3px;width:138px;height:1px;background:#272727;"></div>
<div style="left:876px;top:473.7px;width:138px;height:1px;background:#272727;"></div>
<div style="left:876px;top:500.0px;width:138px;height:1px;background:#272727;"></div>
<div style="left:876px;top:526.5px;width:138px;height:1px;background:#272727;"></div>
<div style="left:891.3px;top:421.2px;width:1px;height:106px;background:#2a2a2a;"></div>
<div style="left:905.5px;top:421.2px;width:1px;height:106px;background:#2a2a2a;"></div>
<svg style="left:876.5px;top:429.5px;" width="14" height="10" viewBox="0 0 14 10"><path d="M.8 5C3.500 1 10.500 1 13.200 5 10.500 9 3.500 9 .8 5z" fill="#d6d6d6"/><circle cx="7" cy="5" r="2.500" fill="#4a4a4a"/><circle cx="7" cy="5" r="1.200" fill="#d6d6d6"/></svg>
<svg style="left:876.5px;top:455.8px;" width="14" height="10" viewBox="0 0 14 10"><path d="M.8 5C3.500 1 10.500 1 13.200 5 10.500 9 3.500 9 .8 5z" fill="#d6d6d6"/><circle cx="7" cy="5" r="2.500" fill="#4a4a4a"/><circle cx="7" cy="5" r="1.200" fill="#d6d6d6"/></svg>
<svg style="left:876.5px;top:508.5px;" width="14" height="10" viewBox="0 0 14 10"><path d="M.8 5C3.500 1 10.500 1 13.200 5 10.500 9 3.500 9 .8 5z" fill="#d6d6d6"/><circle cx="7" cy="5" r="2.500" fill="#4a4a4a"/><circle cx="7" cy="5" r="1.200" fill="#d6d6d6"/></svg>
<div style="left:879.5px;top:483.2px;width:8px;height:8px;background:#3e3e3e;border:1px solid #424242;"></div>
<div style="left:894.8px;top:456.8px;width:8px;height:8px;background:#3e3e3e;border:1px solid #424242;"></div>
<div style="left:894.8px;top:483.2px;width:8px;height:8px;background:#3e3e3e;border:1px solid #424242;"></div>
<div style="left:894.8px;top:509.5px;width:8px;height:8px;background:#3e3e3e;border:1px solid #424242;"></div>
<svg style="left:892px;top:427.5px;" width="13" height="13" viewBox="0 0 13 13"><path d="M3 9L10 2" stroke="#d8d8d8" stroke-width="1.400"/><path d="M1.500 11h10" stroke="#d8d8d8" stroke-width="1.100"/></svg>
<div style="left:910px;top:423.0px;width:19.5px;height:23.5px;background:#20242e;border:1px solid #9fb0d8;"></div>
<div style="left:912.5px;top:425.0px;width:14.5px;height:20px;background:#fbe8d5;"></div>
<svg style="left:912.5px;top:425.0px;" width="14.5" height="20" viewBox="0 0 14.5 20"><ellipse cx="7.300" cy="7" rx="2.800" ry="2.300" fill="#fff" stroke="#444" stroke-width=".5"/><path d="M4.800 5.300L4.500 3.500l1.800 1zM8.500 4.800l.8-1.800.7 2z" fill="#333"/><path d="M6 9.500c2 1 3.500.5 5-1-1 2-2.500 3.500-6 3.500z" fill="#fff" stroke="#444" stroke-width=".4"/><path d="M4.500 13.800h6" stroke="#222" stroke-width=".7"/><path d="M3.500 16.500h8" stroke="#e070d0" stroke-width="1"/></svg>
<div style="left:912px;top:450.8px;width:15px;height:20.5px;background:#fff;background:repeating-conic-gradient(#c9c9c9 0 25%,#ffffff 0 50%) 0 0/7.4px 7.4px;"></div>
<div style="left:912px;top:477.2px;width:15px;height:20.5px;background:#fff;background:repeating-conic-gradient(#c9c9c9 0 25%,#ffffff 0 50%) 0 0/7.4px 7.4px;"></div>
<div style="left:912px;top:503.5px;width:15px;height:20.5px;background:#ffffff;"></div>
<span class="t" style="left:933px;top:423.30px;font-size:9px;line-height:13px;color:#e0e0e0;transform:scaleX(0.9124);">100 % 通常</span>
<span class="t" style="left:934px;top:434.80px;font-size:9px;line-height:13px;color:#e0e0e0;transform:scaleX(0.8873);">色</span>
<span class="t" style="left:933px;top:449.10px;font-size:9px;line-height:13px;color:#d0d0d0;transform:scaleX(0.9124);">100 % 通常</span>
<span class="t" style="left:933.5px;top:460.70px;font-size:9px;line-height:13px;color:#d0d0d0;">線画</span>
<span class="t" style="left:933px;top:475.30px;font-size:9px;line-height:13px;color:#d0d0d0;transform:scaleX(0.9021);">20 % 通常</span>
<span class="t" style="left:933.5px;top:486.80px;font-size:9px;line-height:13px;color:#d0d0d0;transform:scaleX(0.9809);">下描き</span>
<div style="left:937px;top:503px;width:13.5px;height:13.5px;background:#f4f4f4;border-radius:1px;"></div>
<svg style="left:937px;top:503px;" width="13.5" height="13.5" viewBox="0 0 13.5 13.5"><path d="M4 3h6.500v8H6L4 9z" fill="#f4f4f4" stroke="#333" stroke-width="1.100"/><path d="M4 8.500h2.500V11" fill="#333" stroke="#333" stroke-width=".8"/></svg>
<span class="t" style="left:953px;top:512.50px;font-size:9px;line-height:13px;color:#d0d0d0;">用紙</span>
<svg style="left:350px;top:100px;" width="341" height="483" viewBox="350 100 341 483"><g transform="translate(400,270) scale(0.25)" stroke-linejoin="round" stroke-linecap="round">
<path d="M600 100 L640 100 C680 92 740 68 770 50 C795 35 815 20 828 14 C838 10 842 16 836 24 C825 40 810 55 795 68 C775 88 750 105 735 112 C715 122 690 135 670 150 C645 170 625 195 626 215 C627 235 640 248 660 250 C690 252 720 238 750 225 C800 200 850 180 890 170 C915 165 935 166 936 173 C935 181 915 184 895 190 C865 200 830 220 804 236 C780 252 750 272 726 291 C712 301 702 307 692 311 C660 340 620 375 570 400 C530 420 480 435 420 437 C370 438 300 428 250 420 C220 416 190 418 180 412 C178 405 200 395 230 390 C270 383 330 385 376 375 C400 368 440 350 460 327 C474 308 474 280 454 261 C435 250 390 250 350 260 C320 270 295 290 275 302 C268 303 268 295 275 285 C290 260 335 222 389 186 L400 150 Z" fill="#fff" stroke="#000" stroke-width="5.2"/>
<path d="M345 215 C362 202 378 192 392 183 L445 160 L510 145 C507 172 478 198 432 209 C402 215 372 219 345 215 Z" fill="#000"/>
<path d="M705 85 C740 68 790 40 828 14 C838 10 842 16 836 24 C815 55 770 95 735 112 C720 108 708 98 705 85 Z" fill="#000"/>
<path d="M454 261 C478 272 492 295 489 315 C487 340 470 358 445 371 C425 380 400 384 380 384 L345 379 C358 378 368 377 376 375 C400 368 440 350 460 327 C474 308 474 280 454 261 Z" fill="#000"/>
<path d="M692 311 C692 286 703 266 724 252 C745 239 780 232 806 235 C780 252 750 272 726 291 C712 301 702 307 692 311Z" fill="#000"/>
</g>
<g transform="translate(400,160) scale(0.25)" stroke-linejoin="round" stroke-linecap="round">
<path d="M92 225 C140 250 190 268 235 285 C255 272 275 262 295 255 C380 215 470 195 545 185 L612 55 C632 100 650 150 665 200 C720 235 750 290 748 340 C745 420 690 490 600 545 C540 580 450 620 360 625 C280 628 200 615 160 585 C120 550 105 490 110 440 L125 385 C115 330 102 275 92 225 Z" fill="#fff" stroke="#000" stroke-width="5.2"/>
<path d="M92 225 C140 250 190 268 235 285 C255 272 275 262 295 255 C285 300 240 355 180 400 C155 418 130 428 112 432 L125 385 C115 330 102 275 92 225 Z" fill="#000"/>
<path d="M122 292L160 335L138 358Z" fill="#f36062"/>
<path d="M622 108L652 195L608 190Z" fill="#f36062" stroke="#000" stroke-width="2.6"/>
<path d="M188 473 C205 430 260 385 320 373 C355 367 395 367 422 370 C415 395 390 430 347 457 C310 480 260 492 222 489 C205 487 193 482 188 473Z" fill="#fff" stroke="#000" stroke-width="5.2"/>
<path d="M504 342 C515 315 540 292 575 275 C615 257 665 254 700 267 C695 290 670 320 635 342 C605 357 565 362 535 358 C520 355 508 350 504 342Z" fill="#fff" stroke="#000" stroke-width="5.2"/>
<path d="M318 389L326 400L333 387C339 410 344 432 347 455L339 457C335 432 328 410 318 389Z" fill="#000" stroke="#000" stroke-width="2.5"/>
<path d="M612 271L620 283L627 270C632 295 635 320 637 343L629 346C626 320 620 296 612 271Z" fill="#000" stroke="#000" stroke-width="2.5"/>
<path d="M680 335C730 310 780 285 825 265" fill="none" stroke="#000" stroke-width="4.5760000000000005"/>
<path d="M688 362C745 340 800 322 858 308" fill="none" stroke="#000" stroke-width="4.5760000000000005"/>
<path d="M702 385C760 368 820 355 878 345" fill="none" stroke="#000" stroke-width="4.5760000000000005"/>
<path d="M250 520C185 545 120 572 58 602" fill="none" stroke="#000" stroke-width="4.5760000000000005"/>
<path d="M262 545C200 580 140 615 88 650" fill="none" stroke="#000" stroke-width="4.5760000000000005"/>
<path d="M288 562C235 600 180 640 135 680" fill="none" stroke="#000" stroke-width="4.5760000000000005"/>
</g>
<path d="M454.600 419.500C460 416 470 413.500 479 413.300L596 413.300C610 413.500 622 416 627.500 419.100 622 420.500 615 421.300 611.900 421.500 600 422.500 590 423.200 586.500 423.400L547 424.400C535 424.800 525 425 518 425.400 514 426.200 511 426.400 508.400 426.400 500 426.400 494 426.200 488.800 425.800 480 425 474 424 469.300 423 463 421.800 458 420.700 454.600 419.500Z" fill="#000"/>
<filter id="dp20" x="-20%" y="-40%" width="140%" height="180%"><feMorphology operator="dilate" radius="1.9 2.7"/><feComponentTransfer result="m"><feFuncA type="linear" slope="3.5" intercept="-0.6"/></feComponentTransfer><feFlood flood-color="#ee68da"/><feComposite in2="m" operator="in"/></filter><filter id="db20" x="-20%" y="-40%" width="140%" height="180%"><feMorphology operator="dilate" radius="2.9 3.7"/><feComponentTransfer result="m"><feFuncA type="linear" slope="3.5" intercept="-0.6"/></feComponentTransfer><feFlood flood-color="#000"/><feComposite in2="m" operator="in"/></filter>
<g filter="url(#db20)"><g transform="rotate(-1.5 443.1 484.3) translate(403.52,494.77) scale(2.7200,0.7195)"><text x="0" y="0" font-family="DejaVu Sans,Liberation Sans,sans-serif" font-weight="200" font-size="40.0" fill="#000">C</text></g></g>
<g filter="url(#dp20)"><g transform="rotate(-1.5 443.1 484.3) translate(403.52,494.77) scale(2.7200,0.7195)"><text x="0" y="0" font-family="DejaVu Sans,Liberation Sans,sans-serif" font-weight="200" font-size="40.0" fill="#ee68da">C</text></g></g>
<filter id="dp21" x="-20%" y="-40%" width="140%" height="180%"><feMorphology operator="dilate" radius="1.3 1.5"/><feComponentTransfer result="m"><feFuncA type="linear" slope="3.5" intercept="-0.6"/></feComponentTransfer><feFlood flood-color="#ee68da"/><feComposite in2="m" operator="in"/></filter><filter id="db21" x="-20%" y="-40%" width="140%" height="180%"><feMorphology operator="dilate" radius="2.3 2.5"/><feComponentTransfer result="m"><feFuncA type="linear" slope="3.5" intercept="-0.6"/></feComponentTransfer><feFlood flood-color="#000"/><feComposite in2="m" operator="in"/></filter>
<g filter="url(#db21)"><g transform="rotate(0.5 533.0 485.7) translate(499.33,498.40) scale(2.4758,0.8699)"><text x="0" y="0" font-family="DejaVu Sans,Liberation Sans,sans-serif" font-weight="200" font-size="40.0" fill="#000">A</text></g></g>
<g filter="url(#dp21)"><g transform="rotate(0.5 533.0 485.7) translate(499.33,498.40) scale(2.4758,0.8699)"><text x="0" y="0" font-family="DejaVu Sans,Liberation Sans,sans-serif" font-weight="200" font-size="40.0" fill="#ee68da">A</text></g></g>
<filter id="dp22" x="-20%" y="-40%" width="140%" height="180%"><feMorphology operator="dilate" radius="1.9 2.7"/><feComponentTransfer result="m"><feFuncA type="linear" slope="3.5" intercept="-0.6"/></feComponentTransfer><feFlood flood-color="#ee68da"/><feComposite in2="m" operator="in"/></filter><filter id="db22" x="-20%" y="-40%" width="140%" height="180%"><feMorphology operator="dilate" radius="2.9 3.7"/><feComponentTransfer result="m"><feFuncA type="linear" slope="3.5" intercept="-0.6"/></feComponentTransfer><feFlood flood-color="#000"/><feComposite in2="m" operator="in"/></filter>
<g filter="url(#db22)"><g transform="rotate(1.0 614.5 486.6) translate(581.15,498.30) scale(2.7225,0.7979)"><text x="0" y="0" font-family="DejaVu Sans,Liberation Sans,sans-serif" font-weight="200" font-size="40.0" fill="#000">T</text></g></g>
<g filter="url(#dp22)"><g transform="rotate(1.0 614.5 486.6) translate(581.15,498.30) scale(2.7225,0.7979)"><text x="0" y="0" font-family="DejaVu Sans,Liberation Sans,sans-serif" font-weight="200" font-size="40.0" fill="#ee68da">T</text></g></g></svg>
</div></body></html>
